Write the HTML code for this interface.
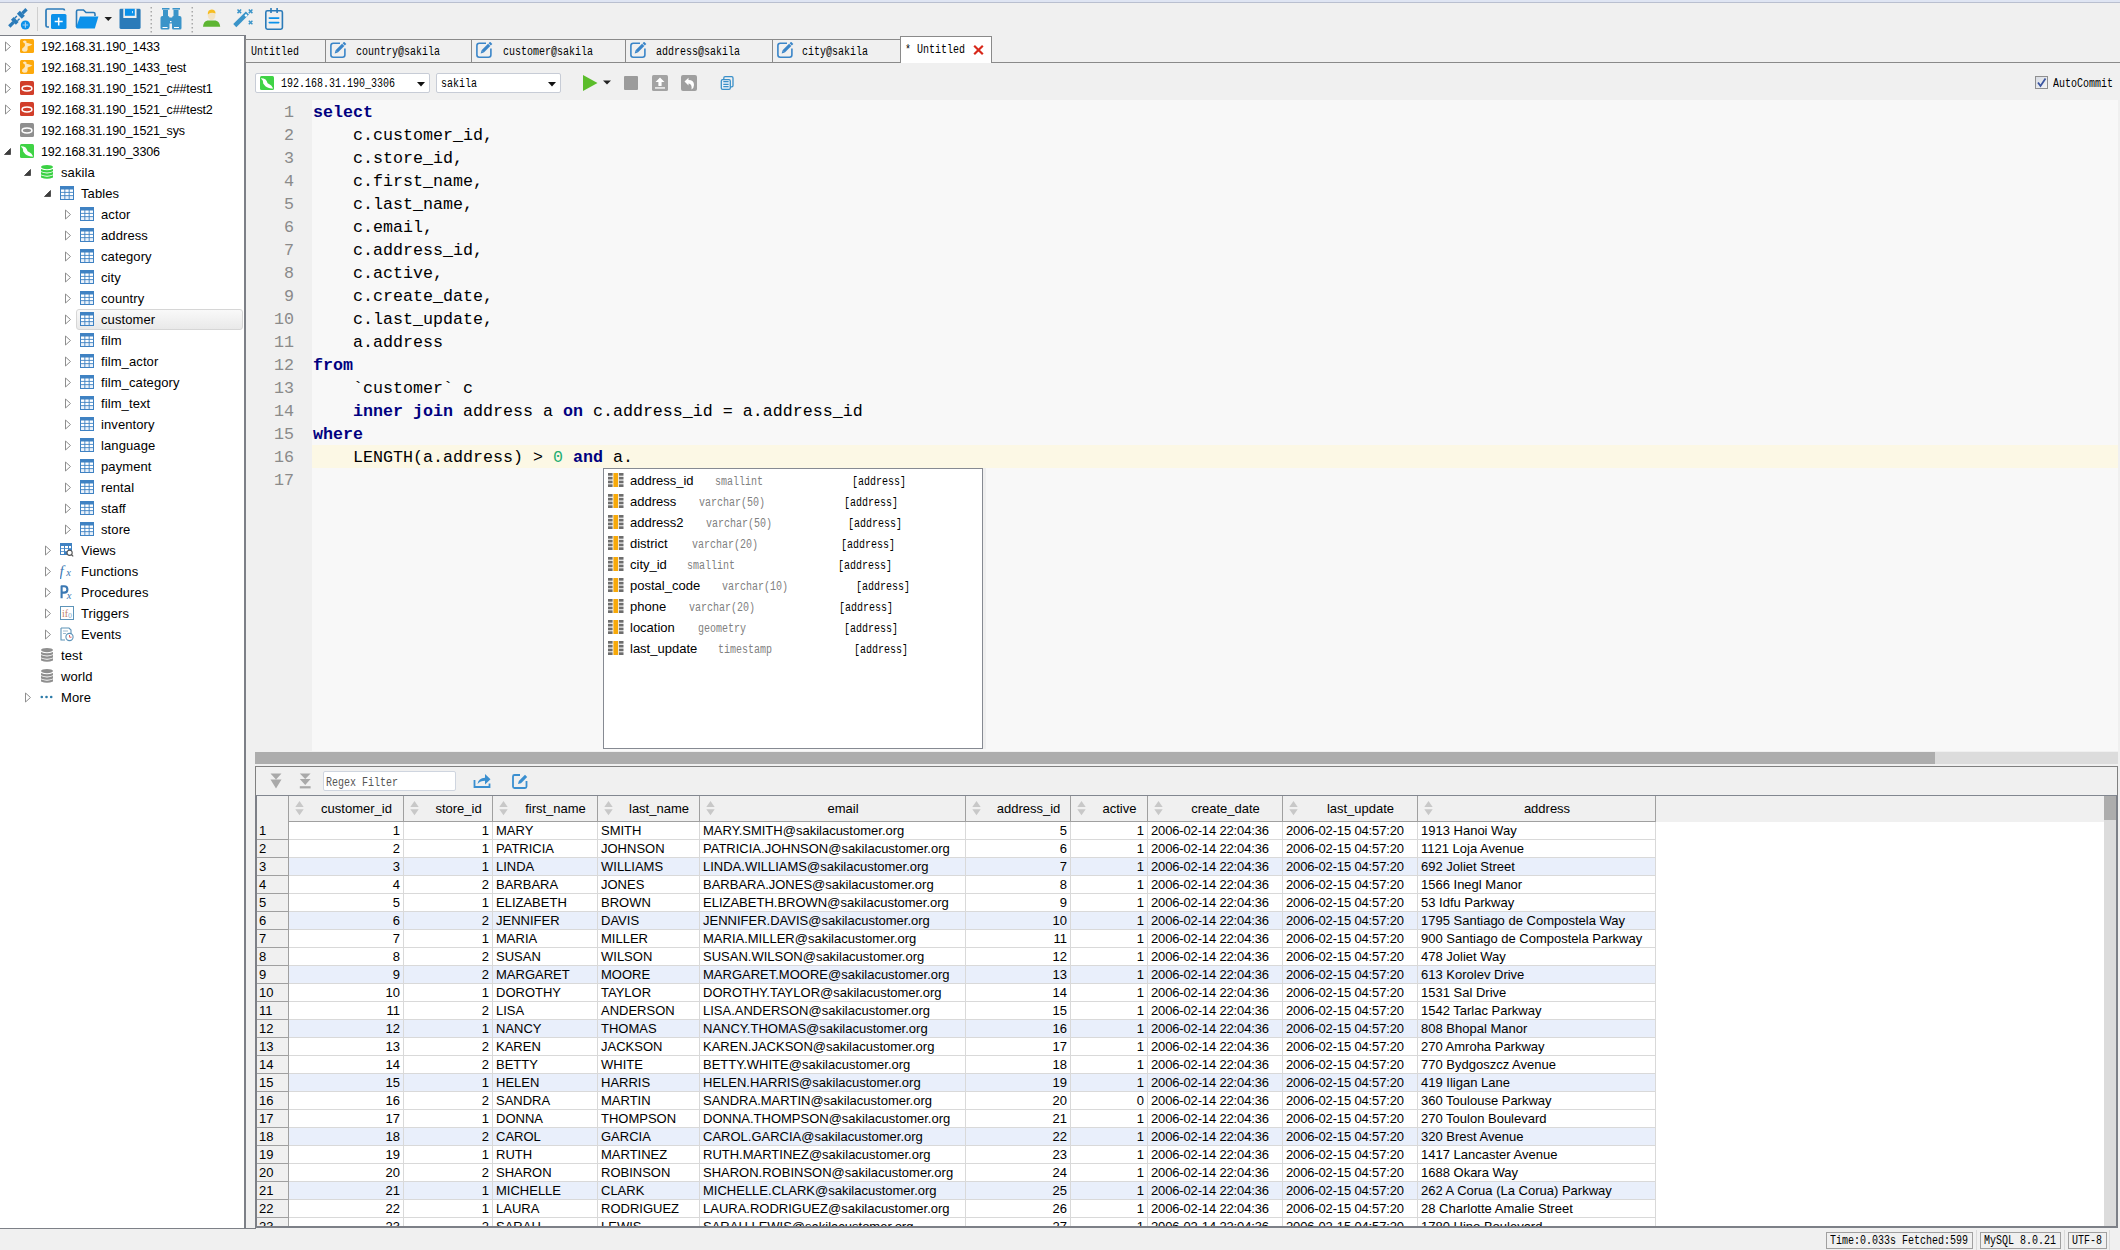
<!DOCTYPE html>
<html><head><meta charset="utf-8">
<style>
*{margin:0;padding:0;box-sizing:border-box}
html,body{width:2120px;height:1250px;overflow:hidden;background:#f0f0f0;font-family:"Liberation Sans",sans-serif;color:#000}
.a{position:absolute}
#topstrip{left:0;top:0;width:2120px;height:3px;background:#dfe5f3;border-bottom:1px solid #b9bfcf}
#left{left:0;top:35px;width:246px;height:1194px;background:#fff;border-top:1px solid #7d8087;border-right:2px solid #7d8087;border-bottom:1px solid #7d8087}
.tt{font-size:12.5px;line-height:21px;height:21px;white-space:nowrap;letter-spacing:-0.15px;color:#000}
.sel{width:167px;height:21px;border:1px solid #d6d6d6;border-radius:3px;background:linear-gradient(#f9f9f9,#e9e9e9)}
#tabline{left:246px;top:62px;width:1874px;height:1px;background:#8a8a8a}
#gutter{left:246px;top:100px;width:66px;height:651px;background:#f0f0f0}
#code{left:312px;top:100px;width:1806px;height:651px;background:#f8f8f8}
#hscroll{left:255px;top:752px;width:1863px;height:12px;background:#dcdcdc}
#hthumb{left:255px;top:752px;width:1680px;height:12px;background:#adadad}
#results{left:255px;top:766px;width:1863px;height:462px;border:1px solid #808080;border-bottom:2px solid #7d8087;background:#f0f0f0}
#grid{left:255px;top:795px;width:1863px;height:433px;background:#fff;border-top:1px solid #828790;border-left:2px solid #7d8087;border-right:2px solid #7d8087;border-bottom:2px solid #7d8087}
.ss{font-family:"Liberation Mono",monospace;font-size:12px;letter-spacing:0;line-height:14px;white-space:nowrap;color:#000;transform:scaleX(0.8333);transform-origin:0 0}
.tab{top:39px;height:24px;border:1px solid #8a8a8a;background:#f0f0f0}
.combo{background:#fff;border:1px solid #c7ccd6;border-radius:2px}
.ln{left:246px;width:48px;text-align:right;font-family:"Liberation Mono",monospace;font-size:16.67px;line-height:23px;color:#8a8a8a}
.code{left:313px;font-family:"Liberation Mono",monospace;font-size:16.67px;line-height:23px;white-space:pre;color:#000}
.kw{color:#000080;font-weight:bold}
.num{color:#1fae72}
.pn{font-size:13px;line-height:21px;white-space:nowrap;color:#000}
.pt{color:#808080}
.hd{top:796px;height:25px;line-height:25px;text-align:center;font-size:13px;white-space:nowrap}
.gc{height:17px;line-height:18px;font-size:13px;white-space:nowrap}
.dt{letter-spacing:-0.15px}
.sb{top:1232px;height:17px;border:1px solid #a0a0a0;font-family:"Liberation Mono",monospace;font-size:12px;letter-spacing:-1.2px;line-height:16px;padding-left:3px;white-space:nowrap;overflow:hidden}
.tw{font-size:13px;letter-spacing:0.1px}

</style></head>
<body>
<div id="topstrip" class="a"></div>
<div id="left" class="a"></div>
<svg class="a" style="left:5px;top:41px" width="8" height="12" viewBox="0 0 8 12"><path d="M0.5 1 L5.5 5.5 L0.5 10 Z" fill="#fff" stroke="#8e8e8e" stroke-width="1"/></svg>
<svg class="a" style="left:20px;top:39px" width="14" height="15" viewBox="0 0 14 15"><rect x="0" y="0" width="14" height="14" rx="1.5" fill="#fda90b"/><path d="M2.8 2.5 L4.5 1.4 L6.3 2 L6.5 3.8 L9.5 4.6 L12.4 5.6 L10.5 6.6 L7.6 7.6 L7.6 10.8 L6.5 12.5 L3.8 12.8 L2 11.5 L2.2 9.6 L4 8 L5 6.6 L4.8 4.6 L3.4 3.5 Z" fill="#fde6bb"/></svg>
<div class="a tt" style="left:41px;top:37px">192.168.31.190_1433</div>
<svg class="a" style="left:5px;top:62px" width="8" height="12" viewBox="0 0 8 12"><path d="M0.5 1 L5.5 5.5 L0.5 10 Z" fill="#fff" stroke="#8e8e8e" stroke-width="1"/></svg>
<svg class="a" style="left:20px;top:60px" width="14" height="15" viewBox="0 0 14 15"><rect x="0" y="0" width="14" height="14" rx="1.5" fill="#fda90b"/><path d="M2.8 2.5 L4.5 1.4 L6.3 2 L6.5 3.8 L9.5 4.6 L12.4 5.6 L10.5 6.6 L7.6 7.6 L7.6 10.8 L6.5 12.5 L3.8 12.8 L2 11.5 L2.2 9.6 L4 8 L5 6.6 L4.8 4.6 L3.4 3.5 Z" fill="#fde6bb"/></svg>
<div class="a tt" style="left:41px;top:58px">192.168.31.190_1433_test</div>
<svg class="a" style="left:5px;top:83px" width="8" height="12" viewBox="0 0 8 12"><path d="M0.5 1 L5.5 5.5 L0.5 10 Z" fill="#fff" stroke="#8e8e8e" stroke-width="1"/></svg>
<svg class="a" style="left:20px;top:81px" width="14" height="15" viewBox="0 0 14 15"><rect x="0" y="0" width="14" height="14" rx="1.5" fill="#d13e2a"/><ellipse cx="7" cy="7.5" rx="4.9" ry="2.4" fill="none" stroke="#fff" stroke-width="1.5"/></svg>
<div class="a tt" style="left:41px;top:79px">192.168.31.190_1521_c##test1</div>
<svg class="a" style="left:5px;top:104px" width="8" height="12" viewBox="0 0 8 12"><path d="M0.5 1 L5.5 5.5 L0.5 10 Z" fill="#fff" stroke="#8e8e8e" stroke-width="1"/></svg>
<svg class="a" style="left:20px;top:102px" width="14" height="15" viewBox="0 0 14 15"><rect x="0" y="0" width="14" height="14" rx="1.5" fill="#d13e2a"/><ellipse cx="7" cy="7.5" rx="4.9" ry="2.4" fill="none" stroke="#fff" stroke-width="1.5"/></svg>
<div class="a tt" style="left:41px;top:100px">192.168.31.190_1521_c##test2</div>
<svg class="a" style="left:20px;top:123px" width="14" height="15" viewBox="0 0 14 15"><rect x="0" y="0" width="14" height="14" rx="1.5" fill="#8f8f8f"/><ellipse cx="7" cy="7.5" rx="4.9" ry="2.4" fill="none" stroke="#fff" stroke-width="1.5"/></svg>
<div class="a tt" style="left:41px;top:121px">192.168.31.190_1521_sys</div>
<svg class="a" style="left:4px;top:148px" width="8" height="8" viewBox="0 0 8 8"><path d="M6.5 0.5 L6.5 6.5 L0.5 6.5 Z" fill="#3d3d3d" stroke="#3d3d3d" stroke-width="0.8" stroke-linejoin="round"/></svg>
<svg class="a" style="left:20px;top:144px" width="14" height="15" viewBox="0 0 14 15"><rect x="0" y="0" width="14" height="14" rx="1.5" fill="#3fd345"/><path d="M0.8 2.3 L3.5 2.4 L5.6 3.6 L6.8 5.2 L7.6 7.2 L9.8 8.6 L11.5 9.8 L12.2 11 L13.3 12.6 L11 12.5 L9 12 L7 11.3 L5.4 10.2 L4.4 9 L3.2 7.6 L3 5.6 L2.6 4.3 L1.6 3.2 Z" fill="#fff"/></svg>
<div class="a tt" style="left:41px;top:142px">192.168.31.190_3306</div>
<svg class="a" style="left:24px;top:169px" width="8" height="8" viewBox="0 0 8 8"><path d="M6.5 0.5 L6.5 6.5 L0.5 6.5 Z" fill="#3d3d3d" stroke="#3d3d3d" stroke-width="0.8" stroke-linejoin="round"/></svg>
<svg class="a" style="left:40px;top:165px" width="14" height="15" viewBox="0 0 14 15"><ellipse cx="7" cy="2.1" rx="6" ry="2.1" fill="#3ad143"/><path d="M1 3.9 Q7 6.6 13 3.9 V6.2 Q7 9 1 6.2 Z" fill="#3ad143"/><path d="M1 7.1 Q7 9.8 13 7.1 V9.4 Q7 12.2 1 9.4 Z" fill="#3ad143"/><path d="M1 10.3 Q7 13 13 10.3 V12.4 Q7 15.2 1 12.4 Z" fill="#3ad143"/></svg>
<div class="a tt tw" style="left:61px;top:162px">sakila</div>
<svg class="a" style="left:44px;top:190px" width="8" height="8" viewBox="0 0 8 8"><path d="M6.5 0.5 L6.5 6.5 L0.5 6.5 Z" fill="#3d3d3d" stroke="#3d3d3d" stroke-width="0.8" stroke-linejoin="round"/></svg>
<svg class="a" style="left:60px;top:186px" width="14" height="15" viewBox="0 0 14 15"><rect x="0" y="0" width="14" height="14" fill="#3f82c3"/><g fill="#fff"><rect x="1" y="3.5" width="3.4" height="2.4"/><rect x="5.3" y="3.5" width="3.4" height="2.4"/><rect x="9.6" y="3.5" width="3.4" height="2.4"/><rect x="1" y="6.8" width="3.4" height="2.4"/><rect x="5.3" y="6.8" width="3.4" height="2.4"/><rect x="9.6" y="6.8" width="3.4" height="2.4"/></g><g fill="#e9f1fa"><rect x="1" y="10.1" width="3.4" height="2.9"/><rect x="5.3" y="10.1" width="3.4" height="2.9"/><rect x="9.6" y="10.1" width="3.4" height="2.9"/></g></svg>
<div class="a tt tw" style="left:81px;top:183px">Tables</div>
<svg class="a" style="left:65px;top:209px" width="8" height="12" viewBox="0 0 8 12"><path d="M0.5 1 L5.5 5.5 L0.5 10 Z" fill="#fff" stroke="#8e8e8e" stroke-width="1"/></svg>
<svg class="a" style="left:80px;top:207px" width="14" height="15" viewBox="0 0 14 15"><rect x="0" y="0" width="14" height="14" fill="#3f82c3"/><g fill="#fff"><rect x="1" y="3.5" width="3.4" height="2.4"/><rect x="5.3" y="3.5" width="3.4" height="2.4"/><rect x="9.6" y="3.5" width="3.4" height="2.4"/><rect x="1" y="6.8" width="3.4" height="2.4"/><rect x="5.3" y="6.8" width="3.4" height="2.4"/><rect x="9.6" y="6.8" width="3.4" height="2.4"/></g><g fill="#e9f1fa"><rect x="1" y="10.1" width="3.4" height="2.9"/><rect x="5.3" y="10.1" width="3.4" height="2.9"/><rect x="9.6" y="10.1" width="3.4" height="2.9"/></g></svg>
<div class="a tt tw" style="left:101px;top:204px">actor</div>
<svg class="a" style="left:65px;top:230px" width="8" height="12" viewBox="0 0 8 12"><path d="M0.5 1 L5.5 5.5 L0.5 10 Z" fill="#fff" stroke="#8e8e8e" stroke-width="1"/></svg>
<svg class="a" style="left:80px;top:228px" width="14" height="15" viewBox="0 0 14 15"><rect x="0" y="0" width="14" height="14" fill="#3f82c3"/><g fill="#fff"><rect x="1" y="3.5" width="3.4" height="2.4"/><rect x="5.3" y="3.5" width="3.4" height="2.4"/><rect x="9.6" y="3.5" width="3.4" height="2.4"/><rect x="1" y="6.8" width="3.4" height="2.4"/><rect x="5.3" y="6.8" width="3.4" height="2.4"/><rect x="9.6" y="6.8" width="3.4" height="2.4"/></g><g fill="#e9f1fa"><rect x="1" y="10.1" width="3.4" height="2.9"/><rect x="5.3" y="10.1" width="3.4" height="2.9"/><rect x="9.6" y="10.1" width="3.4" height="2.9"/></g></svg>
<div class="a tt tw" style="left:101px;top:225px">address</div>
<svg class="a" style="left:65px;top:251px" width="8" height="12" viewBox="0 0 8 12"><path d="M0.5 1 L5.5 5.5 L0.5 10 Z" fill="#fff" stroke="#8e8e8e" stroke-width="1"/></svg>
<svg class="a" style="left:80px;top:249px" width="14" height="15" viewBox="0 0 14 15"><rect x="0" y="0" width="14" height="14" fill="#3f82c3"/><g fill="#fff"><rect x="1" y="3.5" width="3.4" height="2.4"/><rect x="5.3" y="3.5" width="3.4" height="2.4"/><rect x="9.6" y="3.5" width="3.4" height="2.4"/><rect x="1" y="6.8" width="3.4" height="2.4"/><rect x="5.3" y="6.8" width="3.4" height="2.4"/><rect x="9.6" y="6.8" width="3.4" height="2.4"/></g><g fill="#e9f1fa"><rect x="1" y="10.1" width="3.4" height="2.9"/><rect x="5.3" y="10.1" width="3.4" height="2.9"/><rect x="9.6" y="10.1" width="3.4" height="2.9"/></g></svg>
<div class="a tt tw" style="left:101px;top:246px">category</div>
<svg class="a" style="left:65px;top:272px" width="8" height="12" viewBox="0 0 8 12"><path d="M0.5 1 L5.5 5.5 L0.5 10 Z" fill="#fff" stroke="#8e8e8e" stroke-width="1"/></svg>
<svg class="a" style="left:80px;top:270px" width="14" height="15" viewBox="0 0 14 15"><rect x="0" y="0" width="14" height="14" fill="#3f82c3"/><g fill="#fff"><rect x="1" y="3.5" width="3.4" height="2.4"/><rect x="5.3" y="3.5" width="3.4" height="2.4"/><rect x="9.6" y="3.5" width="3.4" height="2.4"/><rect x="1" y="6.8" width="3.4" height="2.4"/><rect x="5.3" y="6.8" width="3.4" height="2.4"/><rect x="9.6" y="6.8" width="3.4" height="2.4"/></g><g fill="#e9f1fa"><rect x="1" y="10.1" width="3.4" height="2.9"/><rect x="5.3" y="10.1" width="3.4" height="2.9"/><rect x="9.6" y="10.1" width="3.4" height="2.9"/></g></svg>
<div class="a tt tw" style="left:101px;top:267px">city</div>
<svg class="a" style="left:65px;top:293px" width="8" height="12" viewBox="0 0 8 12"><path d="M0.5 1 L5.5 5.5 L0.5 10 Z" fill="#fff" stroke="#8e8e8e" stroke-width="1"/></svg>
<svg class="a" style="left:80px;top:291px" width="14" height="15" viewBox="0 0 14 15"><rect x="0" y="0" width="14" height="14" fill="#3f82c3"/><g fill="#fff"><rect x="1" y="3.5" width="3.4" height="2.4"/><rect x="5.3" y="3.5" width="3.4" height="2.4"/><rect x="9.6" y="3.5" width="3.4" height="2.4"/><rect x="1" y="6.8" width="3.4" height="2.4"/><rect x="5.3" y="6.8" width="3.4" height="2.4"/><rect x="9.6" y="6.8" width="3.4" height="2.4"/></g><g fill="#e9f1fa"><rect x="1" y="10.1" width="3.4" height="2.9"/><rect x="5.3" y="10.1" width="3.4" height="2.9"/><rect x="9.6" y="10.1" width="3.4" height="2.9"/></g></svg>
<div class="a tt tw" style="left:101px;top:288px">country</div>
<div class="a sel" style="left:76px;top:309px"></div>
<svg class="a" style="left:65px;top:314px" width="8" height="12" viewBox="0 0 8 12"><path d="M0.5 1 L5.5 5.5 L0.5 10 Z" fill="#fff" stroke="#8e8e8e" stroke-width="1"/></svg>
<svg class="a" style="left:80px;top:312px" width="14" height="15" viewBox="0 0 14 15"><rect x="0" y="0" width="14" height="14" fill="#3f82c3"/><g fill="#fff"><rect x="1" y="3.5" width="3.4" height="2.4"/><rect x="5.3" y="3.5" width="3.4" height="2.4"/><rect x="9.6" y="3.5" width="3.4" height="2.4"/><rect x="1" y="6.8" width="3.4" height="2.4"/><rect x="5.3" y="6.8" width="3.4" height="2.4"/><rect x="9.6" y="6.8" width="3.4" height="2.4"/></g><g fill="#e9f1fa"><rect x="1" y="10.1" width="3.4" height="2.9"/><rect x="5.3" y="10.1" width="3.4" height="2.9"/><rect x="9.6" y="10.1" width="3.4" height="2.9"/></g></svg>
<div class="a tt tw" style="left:101px;top:309px">customer</div>
<svg class="a" style="left:65px;top:335px" width="8" height="12" viewBox="0 0 8 12"><path d="M0.5 1 L5.5 5.5 L0.5 10 Z" fill="#fff" stroke="#8e8e8e" stroke-width="1"/></svg>
<svg class="a" style="left:80px;top:333px" width="14" height="15" viewBox="0 0 14 15"><rect x="0" y="0" width="14" height="14" fill="#3f82c3"/><g fill="#fff"><rect x="1" y="3.5" width="3.4" height="2.4"/><rect x="5.3" y="3.5" width="3.4" height="2.4"/><rect x="9.6" y="3.5" width="3.4" height="2.4"/><rect x="1" y="6.8" width="3.4" height="2.4"/><rect x="5.3" y="6.8" width="3.4" height="2.4"/><rect x="9.6" y="6.8" width="3.4" height="2.4"/></g><g fill="#e9f1fa"><rect x="1" y="10.1" width="3.4" height="2.9"/><rect x="5.3" y="10.1" width="3.4" height="2.9"/><rect x="9.6" y="10.1" width="3.4" height="2.9"/></g></svg>
<div class="a tt tw" style="left:101px;top:330px">film</div>
<svg class="a" style="left:65px;top:356px" width="8" height="12" viewBox="0 0 8 12"><path d="M0.5 1 L5.5 5.5 L0.5 10 Z" fill="#fff" stroke="#8e8e8e" stroke-width="1"/></svg>
<svg class="a" style="left:80px;top:354px" width="14" height="15" viewBox="0 0 14 15"><rect x="0" y="0" width="14" height="14" fill="#3f82c3"/><g fill="#fff"><rect x="1" y="3.5" width="3.4" height="2.4"/><rect x="5.3" y="3.5" width="3.4" height="2.4"/><rect x="9.6" y="3.5" width="3.4" height="2.4"/><rect x="1" y="6.8" width="3.4" height="2.4"/><rect x="5.3" y="6.8" width="3.4" height="2.4"/><rect x="9.6" y="6.8" width="3.4" height="2.4"/></g><g fill="#e9f1fa"><rect x="1" y="10.1" width="3.4" height="2.9"/><rect x="5.3" y="10.1" width="3.4" height="2.9"/><rect x="9.6" y="10.1" width="3.4" height="2.9"/></g></svg>
<div class="a tt tw" style="left:101px;top:351px">film_actor</div>
<svg class="a" style="left:65px;top:377px" width="8" height="12" viewBox="0 0 8 12"><path d="M0.5 1 L5.5 5.5 L0.5 10 Z" fill="#fff" stroke="#8e8e8e" stroke-width="1"/></svg>
<svg class="a" style="left:80px;top:375px" width="14" height="15" viewBox="0 0 14 15"><rect x="0" y="0" width="14" height="14" fill="#3f82c3"/><g fill="#fff"><rect x="1" y="3.5" width="3.4" height="2.4"/><rect x="5.3" y="3.5" width="3.4" height="2.4"/><rect x="9.6" y="3.5" width="3.4" height="2.4"/><rect x="1" y="6.8" width="3.4" height="2.4"/><rect x="5.3" y="6.8" width="3.4" height="2.4"/><rect x="9.6" y="6.8" width="3.4" height="2.4"/></g><g fill="#e9f1fa"><rect x="1" y="10.1" width="3.4" height="2.9"/><rect x="5.3" y="10.1" width="3.4" height="2.9"/><rect x="9.6" y="10.1" width="3.4" height="2.9"/></g></svg>
<div class="a tt tw" style="left:101px;top:372px">film_category</div>
<svg class="a" style="left:65px;top:398px" width="8" height="12" viewBox="0 0 8 12"><path d="M0.5 1 L5.5 5.5 L0.5 10 Z" fill="#fff" stroke="#8e8e8e" stroke-width="1"/></svg>
<svg class="a" style="left:80px;top:396px" width="14" height="15" viewBox="0 0 14 15"><rect x="0" y="0" width="14" height="14" fill="#3f82c3"/><g fill="#fff"><rect x="1" y="3.5" width="3.4" height="2.4"/><rect x="5.3" y="3.5" width="3.4" height="2.4"/><rect x="9.6" y="3.5" width="3.4" height="2.4"/><rect x="1" y="6.8" width="3.4" height="2.4"/><rect x="5.3" y="6.8" width="3.4" height="2.4"/><rect x="9.6" y="6.8" width="3.4" height="2.4"/></g><g fill="#e9f1fa"><rect x="1" y="10.1" width="3.4" height="2.9"/><rect x="5.3" y="10.1" width="3.4" height="2.9"/><rect x="9.6" y="10.1" width="3.4" height="2.9"/></g></svg>
<div class="a tt tw" style="left:101px;top:393px">film_text</div>
<svg class="a" style="left:65px;top:419px" width="8" height="12" viewBox="0 0 8 12"><path d="M0.5 1 L5.5 5.5 L0.5 10 Z" fill="#fff" stroke="#8e8e8e" stroke-width="1"/></svg>
<svg class="a" style="left:80px;top:417px" width="14" height="15" viewBox="0 0 14 15"><rect x="0" y="0" width="14" height="14" fill="#3f82c3"/><g fill="#fff"><rect x="1" y="3.5" width="3.4" height="2.4"/><rect x="5.3" y="3.5" width="3.4" height="2.4"/><rect x="9.6" y="3.5" width="3.4" height="2.4"/><rect x="1" y="6.8" width="3.4" height="2.4"/><rect x="5.3" y="6.8" width="3.4" height="2.4"/><rect x="9.6" y="6.8" width="3.4" height="2.4"/></g><g fill="#e9f1fa"><rect x="1" y="10.1" width="3.4" height="2.9"/><rect x="5.3" y="10.1" width="3.4" height="2.9"/><rect x="9.6" y="10.1" width="3.4" height="2.9"/></g></svg>
<div class="a tt tw" style="left:101px;top:414px">inventory</div>
<svg class="a" style="left:65px;top:440px" width="8" height="12" viewBox="0 0 8 12"><path d="M0.5 1 L5.5 5.5 L0.5 10 Z" fill="#fff" stroke="#8e8e8e" stroke-width="1"/></svg>
<svg class="a" style="left:80px;top:438px" width="14" height="15" viewBox="0 0 14 15"><rect x="0" y="0" width="14" height="14" fill="#3f82c3"/><g fill="#fff"><rect x="1" y="3.5" width="3.4" height="2.4"/><rect x="5.3" y="3.5" width="3.4" height="2.4"/><rect x="9.6" y="3.5" width="3.4" height="2.4"/><rect x="1" y="6.8" width="3.4" height="2.4"/><rect x="5.3" y="6.8" width="3.4" height="2.4"/><rect x="9.6" y="6.8" width="3.4" height="2.4"/></g><g fill="#e9f1fa"><rect x="1" y="10.1" width="3.4" height="2.9"/><rect x="5.3" y="10.1" width="3.4" height="2.9"/><rect x="9.6" y="10.1" width="3.4" height="2.9"/></g></svg>
<div class="a tt tw" style="left:101px;top:435px">language</div>
<svg class="a" style="left:65px;top:461px" width="8" height="12" viewBox="0 0 8 12"><path d="M0.5 1 L5.5 5.5 L0.5 10 Z" fill="#fff" stroke="#8e8e8e" stroke-width="1"/></svg>
<svg class="a" style="left:80px;top:459px" width="14" height="15" viewBox="0 0 14 15"><rect x="0" y="0" width="14" height="14" fill="#3f82c3"/><g fill="#fff"><rect x="1" y="3.5" width="3.4" height="2.4"/><rect x="5.3" y="3.5" width="3.4" height="2.4"/><rect x="9.6" y="3.5" width="3.4" height="2.4"/><rect x="1" y="6.8" width="3.4" height="2.4"/><rect x="5.3" y="6.8" width="3.4" height="2.4"/><rect x="9.6" y="6.8" width="3.4" height="2.4"/></g><g fill="#e9f1fa"><rect x="1" y="10.1" width="3.4" height="2.9"/><rect x="5.3" y="10.1" width="3.4" height="2.9"/><rect x="9.6" y="10.1" width="3.4" height="2.9"/></g></svg>
<div class="a tt tw" style="left:101px;top:456px">payment</div>
<svg class="a" style="left:65px;top:482px" width="8" height="12" viewBox="0 0 8 12"><path d="M0.5 1 L5.5 5.5 L0.5 10 Z" fill="#fff" stroke="#8e8e8e" stroke-width="1"/></svg>
<svg class="a" style="left:80px;top:480px" width="14" height="15" viewBox="0 0 14 15"><rect x="0" y="0" width="14" height="14" fill="#3f82c3"/><g fill="#fff"><rect x="1" y="3.5" width="3.4" height="2.4"/><rect x="5.3" y="3.5" width="3.4" height="2.4"/><rect x="9.6" y="3.5" width="3.4" height="2.4"/><rect x="1" y="6.8" width="3.4" height="2.4"/><rect x="5.3" y="6.8" width="3.4" height="2.4"/><rect x="9.6" y="6.8" width="3.4" height="2.4"/></g><g fill="#e9f1fa"><rect x="1" y="10.1" width="3.4" height="2.9"/><rect x="5.3" y="10.1" width="3.4" height="2.9"/><rect x="9.6" y="10.1" width="3.4" height="2.9"/></g></svg>
<div class="a tt tw" style="left:101px;top:477px">rental</div>
<svg class="a" style="left:65px;top:503px" width="8" height="12" viewBox="0 0 8 12"><path d="M0.5 1 L5.5 5.5 L0.5 10 Z" fill="#fff" stroke="#8e8e8e" stroke-width="1"/></svg>
<svg class="a" style="left:80px;top:501px" width="14" height="15" viewBox="0 0 14 15"><rect x="0" y="0" width="14" height="14" fill="#3f82c3"/><g fill="#fff"><rect x="1" y="3.5" width="3.4" height="2.4"/><rect x="5.3" y="3.5" width="3.4" height="2.4"/><rect x="9.6" y="3.5" width="3.4" height="2.4"/><rect x="1" y="6.8" width="3.4" height="2.4"/><rect x="5.3" y="6.8" width="3.4" height="2.4"/><rect x="9.6" y="6.8" width="3.4" height="2.4"/></g><g fill="#e9f1fa"><rect x="1" y="10.1" width="3.4" height="2.9"/><rect x="5.3" y="10.1" width="3.4" height="2.9"/><rect x="9.6" y="10.1" width="3.4" height="2.9"/></g></svg>
<div class="a tt tw" style="left:101px;top:498px">staff</div>
<svg class="a" style="left:65px;top:524px" width="8" height="12" viewBox="0 0 8 12"><path d="M0.5 1 L5.5 5.5 L0.5 10 Z" fill="#fff" stroke="#8e8e8e" stroke-width="1"/></svg>
<svg class="a" style="left:80px;top:522px" width="14" height="15" viewBox="0 0 14 15"><rect x="0" y="0" width="14" height="14" fill="#3f82c3"/><g fill="#fff"><rect x="1" y="3.5" width="3.4" height="2.4"/><rect x="5.3" y="3.5" width="3.4" height="2.4"/><rect x="9.6" y="3.5" width="3.4" height="2.4"/><rect x="1" y="6.8" width="3.4" height="2.4"/><rect x="5.3" y="6.8" width="3.4" height="2.4"/><rect x="9.6" y="6.8" width="3.4" height="2.4"/></g><g fill="#e9f1fa"><rect x="1" y="10.1" width="3.4" height="2.9"/><rect x="5.3" y="10.1" width="3.4" height="2.9"/><rect x="9.6" y="10.1" width="3.4" height="2.9"/></g></svg>
<div class="a tt tw" style="left:101px;top:519px">store</div>
<svg class="a" style="left:45px;top:545px" width="8" height="12" viewBox="0 0 8 12"><path d="M0.5 1 L5.5 5.5 L0.5 10 Z" fill="#fff" stroke="#8e8e8e" stroke-width="1"/></svg>
<svg class="a" style="left:60px;top:543px" width="14" height="15" viewBox="0 0 14 15"><rect x="0" y="0" width="12" height="12" fill="#3f82c3"/><g fill="#fff"><rect x="1" y="3" width="3" height="2.2"/><rect x="5" y="3" width="3" height="2.2"/><rect x="9" y="3" width="2" height="2.2"/><rect x="1" y="6" width="3" height="2.2"/><rect x="5" y="6" width="3" height="2.2"/><rect x="1" y="9" width="3" height="2"/></g><circle cx="9.6" cy="9.8" r="2.6" fill="#fff" stroke="#555" stroke-width="1.1"/><path d="M11.4 11.6l1.8 1.8" stroke="#555" stroke-width="1.3"/></svg>
<div class="a tt tw" style="left:81px;top:540px">Views</div>
<svg class="a" style="left:45px;top:566px" width="8" height="12" viewBox="0 0 8 12"><path d="M0.5 1 L5.5 5.5 L0.5 10 Z" fill="#fff" stroke="#8e8e8e" stroke-width="1"/></svg>
<svg class="a" style="left:60px;top:564px" width="14" height="15" viewBox="0 0 14 15"><text x="-0.5" y="11.5" font-family="Liberation Serif" font-style="italic" font-size="15" fill="#3b78b3">f</text><text x="6.2" y="12" font-family="Liberation Serif" font-style="italic" font-size="10.5" fill="#3b78b3">x</text></svg>
<div class="a tt tw" style="left:81px;top:561px">Functions</div>
<svg class="a" style="left:45px;top:587px" width="8" height="12" viewBox="0 0 8 12"><path d="M0.5 1 L5.5 5.5 L0.5 10 Z" fill="#fff" stroke="#8e8e8e" stroke-width="1"/></svg>
<svg class="a" style="left:60px;top:585px" width="14" height="15" viewBox="0 0 14 15"><path d="M1.6 13.2 V1.2 H4.2 Q7.4 1.2 7.4 4.4 Q7.4 7.6 4.2 7.6 H2.6" fill="none" stroke="#3b78b3" stroke-width="2.1" stroke-linejoin="round"/><text x="6.8" y="13.6" font-family="Liberation Serif" font-style="italic" font-size="10.5" fill="#3b78b3">x</text></svg>
<div class="a tt tw" style="left:81px;top:582px">Procedures</div>
<svg class="a" style="left:45px;top:608px" width="8" height="12" viewBox="0 0 8 12"><path d="M0.5 1 L5.5 5.5 L0.5 10 Z" fill="#fff" stroke="#8e8e8e" stroke-width="1"/></svg>
<svg class="a" style="left:60px;top:606px" width="14" height="15" viewBox="0 0 14 15"><rect x="0.5" y="0.5" width="13" height="13" fill="#fff" stroke="#5d93b8" stroke-width="1"/><text x="2" y="11" font-family="Liberation Serif" font-size="10" fill="#c0806a">if</text><text x="8" y="10.5" font-family="Liberation Sans" font-size="6" fill="#5d93b8">()</text></svg>
<div class="a tt tw" style="left:81px;top:603px">Triggers</div>
<svg class="a" style="left:45px;top:629px" width="8" height="12" viewBox="0 0 8 12"><path d="M0.5 1 L5.5 5.5 L0.5 10 Z" fill="#fff" stroke="#8e8e8e" stroke-width="1"/></svg>
<svg class="a" style="left:60px;top:627px" width="14" height="15" viewBox="0 0 14 15"><path d="M1 1h8l2 2v5" fill="none" stroke="#5d93b8" stroke-width="1.1"/><path d="M1 1v12h4" fill="none" stroke="#5d93b8" stroke-width="1.1"/><path d="M3 4h5M3 6.5h3" stroke="#9dbad0" stroke-width="1"/><circle cx="9.5" cy="10" r="3.6" fill="#fff" stroke="#5d93b8" stroke-width="1.1"/><path d="M9.5 8v2.2h2" fill="none" stroke="#d66" stroke-width="1"/></svg>
<div class="a tt tw" style="left:81px;top:624px">Events</div>
<svg class="a" style="left:40px;top:648px" width="14" height="15" viewBox="0 0 14 15"><ellipse cx="7" cy="2.1" rx="6" ry="2.1" fill="#8f8f8f"/><path d="M1 3.9 Q7 6.6 13 3.9 V6.2 Q7 9 1 6.2 Z" fill="#8f8f8f"/><path d="M1 7.1 Q7 9.8 13 7.1 V9.4 Q7 12.2 1 9.4 Z" fill="#8f8f8f"/><path d="M1 10.3 Q7 13 13 10.3 V12.4 Q7 15.2 1 12.4 Z" fill="#8f8f8f"/></svg>
<div class="a tt tw" style="left:61px;top:645px">test</div>
<svg class="a" style="left:40px;top:669px" width="14" height="15" viewBox="0 0 14 15"><ellipse cx="7" cy="2.1" rx="6" ry="2.1" fill="#8f8f8f"/><path d="M1 3.9 Q7 6.6 13 3.9 V6.2 Q7 9 1 6.2 Z" fill="#8f8f8f"/><path d="M1 7.1 Q7 9.8 13 7.1 V9.4 Q7 12.2 1 9.4 Z" fill="#8f8f8f"/><path d="M1 10.3 Q7 13 13 10.3 V12.4 Q7 15.2 1 12.4 Z" fill="#8f8f8f"/></svg>
<div class="a tt tw" style="left:61px;top:666px">world</div>
<svg class="a" style="left:25px;top:692px" width="8" height="12" viewBox="0 0 8 12"><path d="M0.5 1 L5.5 5.5 L0.5 10 Z" fill="#fff" stroke="#8e8e8e" stroke-width="1"/></svg>
<svg class="a" style="left:40px;top:690px" width="14" height="15" viewBox="0 0 14 15"><circle cx="1.8" cy="7" r="1.3" fill="#2c7aa8"/><circle cx="6.5" cy="7" r="1.3" fill="#2c7aa8"/><circle cx="11.2" cy="7" r="1.3" fill="#2c7aa8"/></svg>
<div class="a tt tw" style="left:61px;top:687px">More</div>
<svg class="a" style="left:0;top:3px" width="300" height="32" viewBox="0 3 300 32">
<!-- connection -->
<g transform="rotate(-45 18 18)" fill="#2b7bb9">
<rect x="5.8" y="16.2" width="6.2" height="3.3"/>
<rect x="11.8" y="14.2" width="3.9" height="7"/>
<rect x="15.6" y="15.1" width="3" height="1.4"/>
<rect x="15.6" y="18.9" width="3" height="1.4"/>
<rect x="20.2" y="14.2" width="4.3" height="7"/>
<rect x="24.4" y="16.2" width="5.8" height="3.3"/>
</g>
<circle cx="25.4" cy="25" r="4.6" fill="#0b91ea"/>
<path d="M25.4 22.2v5.6M22.6 25h5.6" stroke="#9fd0f6" stroke-width="1.2"/>
<rect x="37" y="7" width="1" height="24" fill="#cfcfcf"/>
<!-- new query -->
<path d="M49 27 L47.5 27 Q46 27 46 25.5 L46 10.5 Q46 9 47.5 9 L63 9 Q64.5 9 64.5 10.5" fill="none" stroke="#2b7bb9" stroke-width="1.7"/>
<rect x="51" y="14" width="15.5" height="15" rx="1.5" fill="#0b91ea"/>
<path d="M58.7 17.5v8M54.7 21.5h8" stroke="#fff" stroke-width="1.5"/>
<!-- folder -->
<path d="M76.5 27 L76.5 11.5 Q76.5 10 78 10 L83.5 10 L86 12.5 L93.5 12.5 Q95 12.5 95 14 L95 16" fill="none" stroke="#2b7bb9" stroke-width="1.6"/>
<path d="M76.2 27.2 Q76.2 28.6 77.6 28.6 L94.8 28.6 L98.4 16.6 L80 16.6 Z" fill="#0b91ea"/>
<path d="M104.5 17 L112 17 L108.25 21 Z" fill="#1e1e1e"/>
<!-- save -->
<path d="M119.5 10 Q119.5 8.8 120.7 8.8 L139.3 8.8 Q140.6 8.8 140.6 10 L140.6 27.6 Q140.6 29 139.3 29 L120.8 29 Q119.5 29 119.5 27.6 Z" fill="#2b7bb9"/>
<rect x="123.3" y="8.5" width="13.2" height="9.5" fill="#f0f0f0"/>
<rect x="124.9" y="8.8" width="9.9" height="7" fill="#0b91ea"/>
<rect x="132" y="11" width="0.9" height="2.2" fill="#cfe8fb"/>
<!-- dotted seps -->
<g fill="#a8a8a8">
<rect x="150.5" y="7" width="1.5" height="1.5"/><rect x="150.5" y="11" width="1.5" height="1.5"/><rect x="150.5" y="15" width="1.5" height="1.5"/><rect x="150.5" y="19" width="1.5" height="1.5"/><rect x="150.5" y="23" width="1.5" height="1.5"/><rect x="150.5" y="27" width="1.5" height="1.5"/><rect x="150.5" y="31" width="1.5" height="1.5"/>
<rect x="191.5" y="7" width="1.5" height="1.5"/><rect x="191.5" y="11" width="1.5" height="1.5"/><rect x="191.5" y="15" width="1.5" height="1.5"/><rect x="191.5" y="19" width="1.5" height="1.5"/><rect x="191.5" y="23" width="1.5" height="1.5"/><rect x="191.5" y="27" width="1.5" height="1.5"/><rect x="191.5" y="31" width="1.5" height="1.5"/>
</g>
<!-- binoculars -->
<g fill="#3a94c9">
<rect x="162" y="8" width="7.5" height="1.6"/>
<rect x="172.5" y="8" width="7.5" height="1.6"/>
<rect x="163" y="10" width="5" height="6"/>
<rect x="173.5" y="10" width="5" height="6"/>
<path d="M160.5 18 Q160.5 16 162.5 16 L168 16 Q169.5 16 169.5 18 L169.5 28 Q169.5 29.5 168 29.5 L162 29.5 Q160.5 29.5 160.5 28 Z"/>
<path d="M172 18 Q172 16 173.5 16 L179.5 16 Q181.5 16 181.5 18 L181.5 28 Q181.5 29.5 180 29.5 L173.5 29.5 Q172 29.5 172 28 Z"/>
<rect x="169" y="17.5" width="3.5" height="6"/>
</g>
<rect x="162.5" y="27" width="5" height="1" fill="#fff"/><rect x="174" y="27" width="5" height="1" fill="#fff"/>
<rect x="170" y="21" width="1.5" height="1.2" fill="#fff"/>
<!-- user -->
<path d="M203 26.8 Q203.3 21.5 207.5 20.5 L215.5 20.5 Q219.8 21.5 220.2 26.8 Z" fill="#5db532"/>
<ellipse cx="211.6" cy="15.5" rx="3.8" ry="4.6" fill="#f3e3c3"/>
<path d="M207.8 14.5 Q207.5 9.7 211.6 9.5 Q215.5 9.7 215.6 13.5 Q213 12.2 210 13 Z" fill="#f6bd22"/>
<!-- wand -->
<path d="M234.8 25.6 L247.4 13" stroke="#3a94c9" stroke-width="4.4"/>
<rect x="244.9" y="14.3" width="2.2" height="2.2" fill="#fff" transform="rotate(45 246 15.4)"/>
<g stroke="#3a94c9" stroke-width="1.5">
<path d="M237.5 9.5l3.6 3.6M241.1 9.5l-3.6 3.6"/>
<path d="M248.8 9.5l3.6 3.6M252.4 9.5l-3.6 3.6"/>
<path d="M248.8 20.7l3.6 3.6M252.4 20.7l-3.6 3.6"/>
</g>
<!-- notepad -->
<rect x="265.8" y="10.8" width="16.6" height="18.4" rx="1.6" fill="none" stroke="#2b7bb9" stroke-width="1.6"/>
<rect x="270.2" y="8" width="1.6" height="5" fill="#2b7bb9"/>
<rect x="276.3" y="8" width="1.6" height="5" fill="#2b7bb9"/>
<rect x="268.5" y="17.3" width="11" height="1.6" rx=".8" fill="#0b91ea"/>
<rect x="268.5" y="21.8" width="11" height="1.6" rx=".8" fill="#0b91ea"/>
</svg>
<div id="tabline" class="a"></div>
<div class="a tab" style="left:245px;width:81px"></div>
<div class="a ss" style="left:251px;top:45px">Untitled</div>
<div class="a tab" style="left:325px;width:147px"></div>
<svg class="a" style="left:330px;top:42px" width="17" height="17" viewBox="0 0 17 17"><path d="M10 1.2 H3.3 Q0.9 1.2 0.9 3.6 V12.8 Q0.9 15.2 3.3 15.2 H12.5 Q14.9 15.2 14.9 12.8 V6.4" fill="none" stroke="#3a85c8" stroke-width="1.6"/><g transform="translate(-0.3 0.7)" fill="#3a85c8"><path d="M5.87 7.47 L12.37 0.97 L14.63 3.23 L8.13 9.73 Z"/><path d="M5.87 7.47 L8.13 9.73 L5 10.8 Z"/><path d="M12.9 0.5 L14.4 -1 L16.6 1.2 L15.1 2.7 Z"/></g></svg>
<div class="a ss" style="left:356px;top:45px">country@sakila</div>
<div class="a tab" style="left:471px;width:155px"></div>
<svg class="a" style="left:476px;top:42px" width="17" height="17" viewBox="0 0 17 17"><path d="M10 1.2 H3.3 Q0.9 1.2 0.9 3.6 V12.8 Q0.9 15.2 3.3 15.2 H12.5 Q14.9 15.2 14.9 12.8 V6.4" fill="none" stroke="#3a85c8" stroke-width="1.6"/><g transform="translate(-0.3 0.7)" fill="#3a85c8"><path d="M5.87 7.47 L12.37 0.97 L14.63 3.23 L8.13 9.73 Z"/><path d="M5.87 7.47 L8.13 9.73 L5 10.8 Z"/><path d="M12.9 0.5 L14.4 -1 L16.6 1.2 L15.1 2.7 Z"/></g></svg>
<div class="a ss" style="left:503px;top:45px">customer@sakila</div>
<div class="a tab" style="left:625px;width:148px"></div>
<svg class="a" style="left:630px;top:42px" width="17" height="17" viewBox="0 0 17 17"><path d="M10 1.2 H3.3 Q0.9 1.2 0.9 3.6 V12.8 Q0.9 15.2 3.3 15.2 H12.5 Q14.9 15.2 14.9 12.8 V6.4" fill="none" stroke="#3a85c8" stroke-width="1.6"/><g transform="translate(-0.3 0.7)" fill="#3a85c8"><path d="M5.87 7.47 L12.37 0.97 L14.63 3.23 L8.13 9.73 Z"/><path d="M5.87 7.47 L8.13 9.73 L5 10.8 Z"/><path d="M12.9 0.5 L14.4 -1 L16.6 1.2 L15.1 2.7 Z"/></g></svg>
<div class="a ss" style="left:656px;top:45px">address@sakila</div>
<div class="a tab" style="left:772px;width:129px"></div>
<svg class="a" style="left:777px;top:42px" width="17" height="17" viewBox="0 0 17 17"><path d="M10 1.2 H3.3 Q0.9 1.2 0.9 3.6 V12.8 Q0.9 15.2 3.3 15.2 H12.5 Q14.9 15.2 14.9 12.8 V6.4" fill="none" stroke="#3a85c8" stroke-width="1.6"/><g transform="translate(-0.3 0.7)" fill="#3a85c8"><path d="M5.87 7.47 L12.37 0.97 L14.63 3.23 L8.13 9.73 Z"/><path d="M5.87 7.47 L8.13 9.73 L5 10.8 Z"/><path d="M12.9 0.5 L14.4 -1 L16.6 1.2 L15.1 2.7 Z"/></g></svg>
<div class="a ss" style="left:802px;top:45px">city@sakila</div>
<div class="a" style="left:900px;top:36px;width:92px;height:27px;background:#fff;border:1px solid #8a8a8a;border-bottom:none"></div>
<div class="a ss" style="left:905px;top:43px">* Untitled</div>
<svg class="a" style="left:973px;top:45px" width="11" height="10" viewBox="0 0 11 10"><path d="M1.2 0.8 L9.8 9.2 M9.8 0.8 L1.2 9.2" stroke="#d8281a" stroke-width="2.2"/></svg>
<div class="a combo" style="left:255px;top:73px;width:175px;height:20px"></div>
<svg class="a" style="left:260px;top:76px" width="14" height="14" viewBox="0 0 14 14"><rect x="0" y="0" width="14" height="14" rx="1.5" fill="#3fd345"/><path d="M0.8 2.3 L3.5 2.4 L5.6 3.6 L6.8 5.2 L7.6 7.2 L9.8 8.6 L11.5 9.8 L12.2 11 L13.3 12.6 L11 12.5 L9 12 L7 11.3 L5.4 10.2 L4.4 9 L3.2 7.6 L3 5.6 L2.6 4.3 L1.6 3.2 Z" fill="#fff"/></svg>
<div class="a ss" style="left:281px;top:77px">192.168.31.190_3306</div>
<svg class="a" style="left:417px;top:82px" width="8" height="5" viewBox="0 0 8 5"><path d="M0 0H8L4 4.5Z" fill="#111"/></svg>
<div class="a combo" style="left:436px;top:73px;width:125px;height:20px"></div>
<div class="a ss" style="left:441px;top:77px">sakila</div>
<svg class="a" style="left:548px;top:82px" width="8" height="5" viewBox="0 0 8 5"><path d="M0 0H8L4 4.5Z" fill="#111"/></svg>
<svg class="a" style="left:575px;top:70px" width="170" height="26" viewBox="575 70 170 26">
<path d="M583 75 L597.5 83 L583 91 Z" fill="#5bbd2b"/>
<path d="M603 80.5 H611 L607 84.5 Z" fill="#222"/>
<rect x="624" y="76" width="14" height="14" rx="1" fill="#9b9b9b"/>
<rect x="652" y="75" width="16" height="16" rx="1.5" fill="#a3a3a3"/>
<path d="M660 77.5 L664.5 82 H661.6 V86 H658.4 V82 H655.5 Z" fill="#fff"/><rect x="655" y="87.3" width="10" height="1.3" fill="#fff"/>
<rect x="681" y="75" width="16" height="16" rx="2" fill="#9f9f9f"/>
<path d="M684.5 81.5 L688.5 77.8 V80 Q694 80 694 85 Q694 88 691.5 89.5 Q692.3 84 688.5 83.5 V85.5 Z" fill="#fff"/>
<rect x="723.8" y="76.7" width="9.2" height="10.1" rx="1.3" fill="none" stroke="#3a90c9" stroke-width="1.3"/>
<rect x="721.3" y="79.6" width="9" height="9.7" rx="1.3" fill="#e9f1f8" stroke="#3a90c9" stroke-width="1.3"/>
<path d="M723.3 81.6h5.3M723.3 84.3h5.3M723.3 86.7h5.3" stroke="#3a90c9" stroke-width="1.2"/>
</svg>
<div class="a" style="left:2035px;top:76px;width:13px;height:13px;border:1px solid #8f8f8f;background:linear-gradient(135deg,#d8dce4,#f4f4f4)"></div>
<svg class="a" style="left:2036px;top:77px" width="11" height="11" viewBox="0 0 11 11"><path d="M2 5.5 L4.5 9 L9.5 1.5" fill="none" stroke="#3b55a0" stroke-width="1.8"/></svg>
<div class="a ss" style="left:2053px;top:77px">AutoCommit</div>
<div id="gutter" class="a"></div>
<div id="code" class="a"></div>
<div class="a" style="left:312px;top:445px;width:1806px;height:23px;background:#fcf8e5"></div>
<div class="a ln" style="top:101px">1</div>
<div class="a code" style="top:101px"><b class="kw">select</b></div>
<div class="a ln" style="top:124px">2</div>
<div class="a code" style="top:124px">    c.customer_id,</div>
<div class="a ln" style="top:147px">3</div>
<div class="a code" style="top:147px">    c.store_id,</div>
<div class="a ln" style="top:170px">4</div>
<div class="a code" style="top:170px">    c.first_name,</div>
<div class="a ln" style="top:193px">5</div>
<div class="a code" style="top:193px">    c.last_name,</div>
<div class="a ln" style="top:216px">6</div>
<div class="a code" style="top:216px">    c.email,</div>
<div class="a ln" style="top:239px">7</div>
<div class="a code" style="top:239px">    c.address_id,</div>
<div class="a ln" style="top:262px">8</div>
<div class="a code" style="top:262px">    c.active,</div>
<div class="a ln" style="top:285px">9</div>
<div class="a code" style="top:285px">    c.create_date,</div>
<div class="a ln" style="top:308px">10</div>
<div class="a code" style="top:308px">    c.last_update,</div>
<div class="a ln" style="top:331px">11</div>
<div class="a code" style="top:331px">    a.address</div>
<div class="a ln" style="top:354px">12</div>
<div class="a code" style="top:354px"><b class="kw">from</b></div>
<div class="a ln" style="top:377px">13</div>
<div class="a code" style="top:377px">    `customer` c</div>
<div class="a ln" style="top:400px">14</div>
<div class="a code" style="top:400px">    <b class="kw">inner</b> <b class="kw">join</b> address a <b class="kw">on</b> c.address_id = a.address_id</div>
<div class="a ln" style="top:423px">15</div>
<div class="a code" style="top:423px"><b class="kw">where</b></div>
<div class="a ln" style="top:446px">16</div>
<div class="a code" style="top:446px">    LENGTH(a.address) &gt; <span class="num">0</span> <b class="kw">and</b> a.</div>
<div class="a ln" style="top:469px">17</div>
<div class="a" style="left:603px;top:468px;width:380px;height:281px;background:#fff;border:1px solid #868a92;box-shadow:3px 0 0 #efefef"></div>
<svg class="a" style="left:608px;top:473px" width="16" height="14" viewBox="0 0 16 14"><g fill="#6d6d6d"><rect x="0" y="0" width="4.6" height="2.7"/><rect x="10.9" y="0" width="4.6" height="2.7"/><rect x="0" y="3.8" width="4.6" height="2.7"/><rect x="10.9" y="3.8" width="4.6" height="2.7"/><rect x="0" y="7.6" width="4.6" height="2.7"/><rect x="10.9" y="7.6" width="4.6" height="2.7"/><rect x="0" y="11.3" width="4.6" height="2.7"/><rect x="10.9" y="11.3" width="4.6" height="2.7"/></g><rect x="5.4" y="0" width="4.7" height="14" fill="#f7a90a"/></svg>
<div class="a pn" style="left:630px;top:470px">address_id</div>
<div class="a ss pt" style="left:715px;top:475px">smallint</div>
<div class="a ss" style="left:852px;top:475px">[address]</div>
<svg class="a" style="left:608px;top:494px" width="16" height="14" viewBox="0 0 16 14"><g fill="#6d6d6d"><rect x="0" y="0" width="4.6" height="2.7"/><rect x="10.9" y="0" width="4.6" height="2.7"/><rect x="0" y="3.8" width="4.6" height="2.7"/><rect x="10.9" y="3.8" width="4.6" height="2.7"/><rect x="0" y="7.6" width="4.6" height="2.7"/><rect x="10.9" y="7.6" width="4.6" height="2.7"/><rect x="0" y="11.3" width="4.6" height="2.7"/><rect x="10.9" y="11.3" width="4.6" height="2.7"/></g><rect x="5.4" y="0" width="4.7" height="14" fill="#f7a90a"/></svg>
<div class="a pn" style="left:630px;top:491px">address</div>
<div class="a ss pt" style="left:699px;top:496px">varchar(50)</div>
<div class="a ss" style="left:844px;top:496px">[address]</div>
<svg class="a" style="left:608px;top:515px" width="16" height="14" viewBox="0 0 16 14"><g fill="#6d6d6d"><rect x="0" y="0" width="4.6" height="2.7"/><rect x="10.9" y="0" width="4.6" height="2.7"/><rect x="0" y="3.8" width="4.6" height="2.7"/><rect x="10.9" y="3.8" width="4.6" height="2.7"/><rect x="0" y="7.6" width="4.6" height="2.7"/><rect x="10.9" y="7.6" width="4.6" height="2.7"/><rect x="0" y="11.3" width="4.6" height="2.7"/><rect x="10.9" y="11.3" width="4.6" height="2.7"/></g><rect x="5.4" y="0" width="4.7" height="14" fill="#f7a90a"/></svg>
<div class="a pn" style="left:630px;top:512px">address2</div>
<div class="a ss pt" style="left:706px;top:517px">varchar(50)</div>
<div class="a ss" style="left:848px;top:517px">[address]</div>
<svg class="a" style="left:608px;top:536px" width="16" height="14" viewBox="0 0 16 14"><g fill="#6d6d6d"><rect x="0" y="0" width="4.6" height="2.7"/><rect x="10.9" y="0" width="4.6" height="2.7"/><rect x="0" y="3.8" width="4.6" height="2.7"/><rect x="10.9" y="3.8" width="4.6" height="2.7"/><rect x="0" y="7.6" width="4.6" height="2.7"/><rect x="10.9" y="7.6" width="4.6" height="2.7"/><rect x="0" y="11.3" width="4.6" height="2.7"/><rect x="10.9" y="11.3" width="4.6" height="2.7"/></g><rect x="5.4" y="0" width="4.7" height="14" fill="#f7a90a"/></svg>
<div class="a pn" style="left:630px;top:533px">district</div>
<div class="a ss pt" style="left:692px;top:538px">varchar(20)</div>
<div class="a ss" style="left:841px;top:538px">[address]</div>
<svg class="a" style="left:608px;top:557px" width="16" height="14" viewBox="0 0 16 14"><g fill="#6d6d6d"><rect x="0" y="0" width="4.6" height="2.7"/><rect x="10.9" y="0" width="4.6" height="2.7"/><rect x="0" y="3.8" width="4.6" height="2.7"/><rect x="10.9" y="3.8" width="4.6" height="2.7"/><rect x="0" y="7.6" width="4.6" height="2.7"/><rect x="10.9" y="7.6" width="4.6" height="2.7"/><rect x="0" y="11.3" width="4.6" height="2.7"/><rect x="10.9" y="11.3" width="4.6" height="2.7"/></g><rect x="5.4" y="0" width="4.7" height="14" fill="#f7a90a"/></svg>
<div class="a pn" style="left:630px;top:554px">city_id</div>
<div class="a ss pt" style="left:687px;top:559px">smallint</div>
<div class="a ss" style="left:838px;top:559px">[address]</div>
<svg class="a" style="left:608px;top:578px" width="16" height="14" viewBox="0 0 16 14"><g fill="#6d6d6d"><rect x="0" y="0" width="4.6" height="2.7"/><rect x="10.9" y="0" width="4.6" height="2.7"/><rect x="0" y="3.8" width="4.6" height="2.7"/><rect x="10.9" y="3.8" width="4.6" height="2.7"/><rect x="0" y="7.6" width="4.6" height="2.7"/><rect x="10.9" y="7.6" width="4.6" height="2.7"/><rect x="0" y="11.3" width="4.6" height="2.7"/><rect x="10.9" y="11.3" width="4.6" height="2.7"/></g><rect x="5.4" y="0" width="4.7" height="14" fill="#f7a90a"/></svg>
<div class="a pn" style="left:630px;top:575px">postal_code</div>
<div class="a ss pt" style="left:722px;top:580px">varchar(10)</div>
<div class="a ss" style="left:856px;top:580px">[address]</div>
<svg class="a" style="left:608px;top:599px" width="16" height="14" viewBox="0 0 16 14"><g fill="#6d6d6d"><rect x="0" y="0" width="4.6" height="2.7"/><rect x="10.9" y="0" width="4.6" height="2.7"/><rect x="0" y="3.8" width="4.6" height="2.7"/><rect x="10.9" y="3.8" width="4.6" height="2.7"/><rect x="0" y="7.6" width="4.6" height="2.7"/><rect x="10.9" y="7.6" width="4.6" height="2.7"/><rect x="0" y="11.3" width="4.6" height="2.7"/><rect x="10.9" y="11.3" width="4.6" height="2.7"/></g><rect x="5.4" y="0" width="4.7" height="14" fill="#f7a90a"/></svg>
<div class="a pn" style="left:630px;top:596px">phone</div>
<div class="a ss pt" style="left:689px;top:601px">varchar(20)</div>
<div class="a ss" style="left:839px;top:601px">[address]</div>
<svg class="a" style="left:608px;top:620px" width="16" height="14" viewBox="0 0 16 14"><g fill="#6d6d6d"><rect x="0" y="0" width="4.6" height="2.7"/><rect x="10.9" y="0" width="4.6" height="2.7"/><rect x="0" y="3.8" width="4.6" height="2.7"/><rect x="10.9" y="3.8" width="4.6" height="2.7"/><rect x="0" y="7.6" width="4.6" height="2.7"/><rect x="10.9" y="7.6" width="4.6" height="2.7"/><rect x="0" y="11.3" width="4.6" height="2.7"/><rect x="10.9" y="11.3" width="4.6" height="2.7"/></g><rect x="5.4" y="0" width="4.7" height="14" fill="#f7a90a"/></svg>
<div class="a pn" style="left:630px;top:617px">location</div>
<div class="a ss pt" style="left:698px;top:622px">geometry</div>
<div class="a ss" style="left:844px;top:622px">[address]</div>
<svg class="a" style="left:608px;top:641px" width="16" height="14" viewBox="0 0 16 14"><g fill="#6d6d6d"><rect x="0" y="0" width="4.6" height="2.7"/><rect x="10.9" y="0" width="4.6" height="2.7"/><rect x="0" y="3.8" width="4.6" height="2.7"/><rect x="10.9" y="3.8" width="4.6" height="2.7"/><rect x="0" y="7.6" width="4.6" height="2.7"/><rect x="10.9" y="7.6" width="4.6" height="2.7"/><rect x="0" y="11.3" width="4.6" height="2.7"/><rect x="10.9" y="11.3" width="4.6" height="2.7"/></g><rect x="5.4" y="0" width="4.7" height="14" fill="#f7a90a"/></svg>
<div class="a pn" style="left:630px;top:638px">last_update</div>
<div class="a ss pt" style="left:718px;top:643px">timestamp</div>
<div class="a ss" style="left:854px;top:643px">[address]</div>
<div id="hscroll" class="a"></div>
<div id="hthumb" class="a"></div>
<div id="results" class="a"></div>
<div id="grid" class="a"></div>
<div class="a" style="left:246px;top:1228px;width:10px;height:1px;background:#7d8087"></div>
<svg class="a" style="left:265px;top:770px" width="270" height="22" viewBox="265 770 270 22">
<path d="M270.5 773.5 H281.5 L276 779.5 Z M270.5 779.5 H281.5 L276 788.5 Z" fill="#a9a9a9"/>
<path d="M270.5 778.2 L276 784 L281.5 778.2" fill="none" stroke="#a9a9a9" stroke-width="0"/>
<path d="M299.8 773.5 H310.6 L305.2 779 Z M299.8 779 H310.6 L305.2 785 Z" fill="#a9a9a9"/>
<rect x="299.8" y="786.2" width="10.8" height="2.2" fill="#a9a9a9"/>
<path d="M474.5 780 V787 H489.5 V783.5" fill="none" stroke="#3a8fd0" stroke-width="1.8"/>
<path d="M477.5 784 Q478.5 778 485 777.8 V774 L490.5 779.3 L485 784.5 V780.8 Q480.5 780.8 477.5 784 Z" fill="#3a8fd0"/>
<path d="M520 775 H514.5 Q513 775 513 776.5 V786.5 Q513 788 514.5 788 H525 Q526.5 788 526.5 786.5 V781" fill="none" stroke="#3a8fd0" stroke-width="1.8"/>
<path d="M518 784 L518.8 781 L525 774.8 L527.2 777 L521 783.2 Z" fill="#3a8fd0"/>
</svg>
<div class="a" style="left:323px;top:771px;width:133px;height:20px;background:#fff;border:1px solid #cfd5df;border-radius:2px"></div>
<div class="a ss" style="left:326px;top:776px;color:#555">Regex Filter</div>
<div class="a" style="left:257px;top:796px;width:1847px;height:430px;overflow:hidden"><div class="a" style="left:-257px;top:-796px;width:2120px;height:1250px">
<div class="a" style="left:257px;top:796px;width:1847px;height:26px;background:#f0f0f0"></div>
<div class="a" style="left:257px;top:821px;width:1398px;height:1px;background:#a0a0a0"></div>
<div class="a" style="left:257px;top:821px;width:31px;height:405px;background:#f0f0f0"></div>
<div class="a" style="left:257px;top:839px;width:31px;height:1px;background:#a0a0a0"></div>
<div class="a" style="left:289px;top:839px;width:1366px;height:1px;background:#d9d9d9"></div>
<div class="a" style="left:257px;top:857px;width:31px;height:1px;background:#a0a0a0"></div>
<div class="a" style="left:289px;top:857px;width:1366px;height:1px;background:#d9d9d9"></div>
<div class="a" style="left:289px;top:858px;width:1366px;height:17px;background:#e9effb"></div>
<div class="a" style="left:257px;top:875px;width:31px;height:1px;background:#a0a0a0"></div>
<div class="a" style="left:289px;top:875px;width:1366px;height:1px;background:#d9d9d9"></div>
<div class="a" style="left:257px;top:893px;width:31px;height:1px;background:#a0a0a0"></div>
<div class="a" style="left:289px;top:893px;width:1366px;height:1px;background:#d9d9d9"></div>
<div class="a" style="left:257px;top:911px;width:31px;height:1px;background:#a0a0a0"></div>
<div class="a" style="left:289px;top:911px;width:1366px;height:1px;background:#d9d9d9"></div>
<div class="a" style="left:289px;top:912px;width:1366px;height:17px;background:#e9effb"></div>
<div class="a" style="left:257px;top:929px;width:31px;height:1px;background:#a0a0a0"></div>
<div class="a" style="left:289px;top:929px;width:1366px;height:1px;background:#d9d9d9"></div>
<div class="a" style="left:257px;top:947px;width:31px;height:1px;background:#a0a0a0"></div>
<div class="a" style="left:289px;top:947px;width:1366px;height:1px;background:#d9d9d9"></div>
<div class="a" style="left:257px;top:965px;width:31px;height:1px;background:#a0a0a0"></div>
<div class="a" style="left:289px;top:965px;width:1366px;height:1px;background:#d9d9d9"></div>
<div class="a" style="left:289px;top:966px;width:1366px;height:17px;background:#e9effb"></div>
<div class="a" style="left:257px;top:983px;width:31px;height:1px;background:#a0a0a0"></div>
<div class="a" style="left:289px;top:983px;width:1366px;height:1px;background:#d9d9d9"></div>
<div class="a" style="left:257px;top:1001px;width:31px;height:1px;background:#a0a0a0"></div>
<div class="a" style="left:289px;top:1001px;width:1366px;height:1px;background:#d9d9d9"></div>
<div class="a" style="left:257px;top:1019px;width:31px;height:1px;background:#a0a0a0"></div>
<div class="a" style="left:289px;top:1019px;width:1366px;height:1px;background:#d9d9d9"></div>
<div class="a" style="left:289px;top:1020px;width:1366px;height:17px;background:#e9effb"></div>
<div class="a" style="left:257px;top:1037px;width:31px;height:1px;background:#a0a0a0"></div>
<div class="a" style="left:289px;top:1037px;width:1366px;height:1px;background:#d9d9d9"></div>
<div class="a" style="left:257px;top:1055px;width:31px;height:1px;background:#a0a0a0"></div>
<div class="a" style="left:289px;top:1055px;width:1366px;height:1px;background:#d9d9d9"></div>
<div class="a" style="left:257px;top:1073px;width:31px;height:1px;background:#a0a0a0"></div>
<div class="a" style="left:289px;top:1073px;width:1366px;height:1px;background:#d9d9d9"></div>
<div class="a" style="left:289px;top:1074px;width:1366px;height:17px;background:#e9effb"></div>
<div class="a" style="left:257px;top:1091px;width:31px;height:1px;background:#a0a0a0"></div>
<div class="a" style="left:289px;top:1091px;width:1366px;height:1px;background:#d9d9d9"></div>
<div class="a" style="left:257px;top:1109px;width:31px;height:1px;background:#a0a0a0"></div>
<div class="a" style="left:289px;top:1109px;width:1366px;height:1px;background:#d9d9d9"></div>
<div class="a" style="left:257px;top:1127px;width:31px;height:1px;background:#a0a0a0"></div>
<div class="a" style="left:289px;top:1127px;width:1366px;height:1px;background:#d9d9d9"></div>
<div class="a" style="left:289px;top:1128px;width:1366px;height:17px;background:#e9effb"></div>
<div class="a" style="left:257px;top:1145px;width:31px;height:1px;background:#a0a0a0"></div>
<div class="a" style="left:289px;top:1145px;width:1366px;height:1px;background:#d9d9d9"></div>
<div class="a" style="left:257px;top:1163px;width:31px;height:1px;background:#a0a0a0"></div>
<div class="a" style="left:289px;top:1163px;width:1366px;height:1px;background:#d9d9d9"></div>
<div class="a" style="left:257px;top:1181px;width:31px;height:1px;background:#a0a0a0"></div>
<div class="a" style="left:289px;top:1181px;width:1366px;height:1px;background:#d9d9d9"></div>
<div class="a" style="left:289px;top:1182px;width:1366px;height:17px;background:#e9effb"></div>
<div class="a" style="left:257px;top:1199px;width:31px;height:1px;background:#a0a0a0"></div>
<div class="a" style="left:289px;top:1199px;width:1366px;height:1px;background:#d9d9d9"></div>
<div class="a" style="left:257px;top:1217px;width:31px;height:1px;background:#a0a0a0"></div>
<div class="a" style="left:289px;top:1217px;width:1366px;height:1px;background:#d9d9d9"></div>
<div class="a" style="left:257px;top:1235px;width:31px;height:1px;background:#a0a0a0"></div>
<div class="a" style="left:289px;top:1235px;width:1366px;height:1px;background:#d9d9d9"></div>
<div class="a" style="left:288px;top:796px;width:1px;height:430px;background:#a0a0a0"></div>
<div class="a" style="left:403px;top:796px;width:1px;height:26px;background:#a0a0a0"></div>
<div class="a" style="left:403px;top:822px;width:1px;height:404px;background:#d9d9d9"></div>
<svg class="a" style="left:295px;top:801px" width="9" height="15" viewBox="0 0 9 15"><path d="M0.3 6 L4.5 0 L8.7 6 Z M0.3 8.2 L4.5 14.2 L8.7 8.2 Z" fill="#c8c8c8"/></svg>
<div class="a hd" style="left:310px;width:93px">customer_id</div>
<div class="a" style="left:492px;top:796px;width:1px;height:26px;background:#a0a0a0"></div>
<div class="a" style="left:492px;top:822px;width:1px;height:404px;background:#d9d9d9"></div>
<svg class="a" style="left:410px;top:801px" width="9" height="15" viewBox="0 0 9 15"><path d="M0.3 6 L4.5 0 L8.7 6 Z M0.3 8.2 L4.5 14.2 L8.7 8.2 Z" fill="#c8c8c8"/></svg>
<div class="a hd" style="left:425px;width:67px">store_id</div>
<div class="a" style="left:597px;top:796px;width:1px;height:26px;background:#a0a0a0"></div>
<div class="a" style="left:597px;top:822px;width:1px;height:404px;background:#d9d9d9"></div>
<svg class="a" style="left:499px;top:801px" width="9" height="15" viewBox="0 0 9 15"><path d="M0.3 6 L4.5 0 L8.7 6 Z M0.3 8.2 L4.5 14.2 L8.7 8.2 Z" fill="#c8c8c8"/></svg>
<div class="a hd" style="left:514px;width:83px">first_name</div>
<div class="a" style="left:699px;top:796px;width:1px;height:26px;background:#a0a0a0"></div>
<div class="a" style="left:699px;top:822px;width:1px;height:404px;background:#d9d9d9"></div>
<svg class="a" style="left:604px;top:801px" width="9" height="15" viewBox="0 0 9 15"><path d="M0.3 6 L4.5 0 L8.7 6 Z M0.3 8.2 L4.5 14.2 L8.7 8.2 Z" fill="#c8c8c8"/></svg>
<div class="a hd" style="left:619px;width:80px">last_name</div>
<div class="a" style="left:965px;top:796px;width:1px;height:26px;background:#a0a0a0"></div>
<div class="a" style="left:965px;top:822px;width:1px;height:404px;background:#d9d9d9"></div>
<svg class="a" style="left:706px;top:801px" width="9" height="15" viewBox="0 0 9 15"><path d="M0.3 6 L4.5 0 L8.7 6 Z M0.3 8.2 L4.5 14.2 L8.7 8.2 Z" fill="#c8c8c8"/></svg>
<div class="a hd" style="left:721px;width:244px">email</div>
<div class="a" style="left:1070px;top:796px;width:1px;height:26px;background:#a0a0a0"></div>
<div class="a" style="left:1070px;top:822px;width:1px;height:404px;background:#d9d9d9"></div>
<svg class="a" style="left:972px;top:801px" width="9" height="15" viewBox="0 0 9 15"><path d="M0.3 6 L4.5 0 L8.7 6 Z M0.3 8.2 L4.5 14.2 L8.7 8.2 Z" fill="#c8c8c8"/></svg>
<div class="a hd" style="left:987px;width:83px">address_id</div>
<div class="a" style="left:1147px;top:796px;width:1px;height:26px;background:#a0a0a0"></div>
<div class="a" style="left:1147px;top:822px;width:1px;height:404px;background:#d9d9d9"></div>
<svg class="a" style="left:1077px;top:801px" width="9" height="15" viewBox="0 0 9 15"><path d="M0.3 6 L4.5 0 L8.7 6 Z M0.3 8.2 L4.5 14.2 L8.7 8.2 Z" fill="#c8c8c8"/></svg>
<div class="a hd" style="left:1092px;width:55px">active</div>
<div class="a" style="left:1282px;top:796px;width:1px;height:26px;background:#a0a0a0"></div>
<div class="a" style="left:1282px;top:822px;width:1px;height:404px;background:#d9d9d9"></div>
<svg class="a" style="left:1154px;top:801px" width="9" height="15" viewBox="0 0 9 15"><path d="M0.3 6 L4.5 0 L8.7 6 Z M0.3 8.2 L4.5 14.2 L8.7 8.2 Z" fill="#c8c8c8"/></svg>
<div class="a hd" style="left:1169px;width:113px">create_date</div>
<div class="a" style="left:1417px;top:796px;width:1px;height:26px;background:#a0a0a0"></div>
<div class="a" style="left:1417px;top:822px;width:1px;height:404px;background:#d9d9d9"></div>
<svg class="a" style="left:1289px;top:801px" width="9" height="15" viewBox="0 0 9 15"><path d="M0.3 6 L4.5 0 L8.7 6 Z M0.3 8.2 L4.5 14.2 L8.7 8.2 Z" fill="#c8c8c8"/></svg>
<div class="a hd" style="left:1304px;width:113px">last_update</div>
<div class="a" style="left:1655px;top:796px;width:1px;height:26px;background:#a0a0a0"></div>
<div class="a" style="left:1655px;top:822px;width:1px;height:404px;background:#d9d9d9"></div>
<svg class="a" style="left:1424px;top:801px" width="9" height="15" viewBox="0 0 9 15"><path d="M0.3 6 L4.5 0 L8.7 6 Z M0.3 8.2 L4.5 14.2 L8.7 8.2 Z" fill="#c8c8c8"/></svg>
<div class="a hd" style="left:1439px;width:216px">address</div>
<div class="a gc" style="left:259px;top:822px">1</div>
<div class="a gc" style="left:288px;width:112px;top:822px;text-align:right">1</div>
<div class="a gc" style="left:403px;width:86px;top:822px;text-align:right">1</div>
<div class="a gc" style="left:496px;top:822px">MARY</div>
<div class="a gc" style="left:601px;top:822px">SMITH</div>
<div class="a gc" style="left:703px;top:822px">MARY.SMITH@sakilacustomer.org</div>
<div class="a gc" style="left:965px;width:102px;top:822px;text-align:right">5</div>
<div class="a gc" style="left:1070px;width:74px;top:822px;text-align:right">1</div>
<div class="a gc dt" style="left:1151px;top:822px">2006-02-14 22:04:36</div>
<div class="a gc dt" style="left:1286px;top:822px">2006-02-15 04:57:20</div>
<div class="a gc" style="left:1421px;top:822px">1913 Hanoi Way</div>
<div class="a gc" style="left:259px;top:840px">2</div>
<div class="a gc" style="left:288px;width:112px;top:840px;text-align:right">2</div>
<div class="a gc" style="left:403px;width:86px;top:840px;text-align:right">1</div>
<div class="a gc" style="left:496px;top:840px">PATRICIA</div>
<div class="a gc" style="left:601px;top:840px">JOHNSON</div>
<div class="a gc" style="left:703px;top:840px">PATRICIA.JOHNSON@sakilacustomer.org</div>
<div class="a gc" style="left:965px;width:102px;top:840px;text-align:right">6</div>
<div class="a gc" style="left:1070px;width:74px;top:840px;text-align:right">1</div>
<div class="a gc dt" style="left:1151px;top:840px">2006-02-14 22:04:36</div>
<div class="a gc dt" style="left:1286px;top:840px">2006-02-15 04:57:20</div>
<div class="a gc" style="left:1421px;top:840px">1121 Loja Avenue</div>
<div class="a gc" style="left:259px;top:858px">3</div>
<div class="a gc" style="left:288px;width:112px;top:858px;text-align:right">3</div>
<div class="a gc" style="left:403px;width:86px;top:858px;text-align:right">1</div>
<div class="a gc" style="left:496px;top:858px">LINDA</div>
<div class="a gc" style="left:601px;top:858px">WILLIAMS</div>
<div class="a gc" style="left:703px;top:858px">LINDA.WILLIAMS@sakilacustomer.org</div>
<div class="a gc" style="left:965px;width:102px;top:858px;text-align:right">7</div>
<div class="a gc" style="left:1070px;width:74px;top:858px;text-align:right">1</div>
<div class="a gc dt" style="left:1151px;top:858px">2006-02-14 22:04:36</div>
<div class="a gc dt" style="left:1286px;top:858px">2006-02-15 04:57:20</div>
<div class="a gc" style="left:1421px;top:858px">692 Joliet Street</div>
<div class="a gc" style="left:259px;top:876px">4</div>
<div class="a gc" style="left:288px;width:112px;top:876px;text-align:right">4</div>
<div class="a gc" style="left:403px;width:86px;top:876px;text-align:right">2</div>
<div class="a gc" style="left:496px;top:876px">BARBARA</div>
<div class="a gc" style="left:601px;top:876px">JONES</div>
<div class="a gc" style="left:703px;top:876px">BARBARA.JONES@sakilacustomer.org</div>
<div class="a gc" style="left:965px;width:102px;top:876px;text-align:right">8</div>
<div class="a gc" style="left:1070px;width:74px;top:876px;text-align:right">1</div>
<div class="a gc dt" style="left:1151px;top:876px">2006-02-14 22:04:36</div>
<div class="a gc dt" style="left:1286px;top:876px">2006-02-15 04:57:20</div>
<div class="a gc" style="left:1421px;top:876px">1566 Inegl Manor</div>
<div class="a gc" style="left:259px;top:894px">5</div>
<div class="a gc" style="left:288px;width:112px;top:894px;text-align:right">5</div>
<div class="a gc" style="left:403px;width:86px;top:894px;text-align:right">1</div>
<div class="a gc" style="left:496px;top:894px">ELIZABETH</div>
<div class="a gc" style="left:601px;top:894px">BROWN</div>
<div class="a gc" style="left:703px;top:894px">ELIZABETH.BROWN@sakilacustomer.org</div>
<div class="a gc" style="left:965px;width:102px;top:894px;text-align:right">9</div>
<div class="a gc" style="left:1070px;width:74px;top:894px;text-align:right">1</div>
<div class="a gc dt" style="left:1151px;top:894px">2006-02-14 22:04:36</div>
<div class="a gc dt" style="left:1286px;top:894px">2006-02-15 04:57:20</div>
<div class="a gc" style="left:1421px;top:894px">53 Idfu Parkway</div>
<div class="a gc" style="left:259px;top:912px">6</div>
<div class="a gc" style="left:288px;width:112px;top:912px;text-align:right">6</div>
<div class="a gc" style="left:403px;width:86px;top:912px;text-align:right">2</div>
<div class="a gc" style="left:496px;top:912px">JENNIFER</div>
<div class="a gc" style="left:601px;top:912px">DAVIS</div>
<div class="a gc" style="left:703px;top:912px">JENNIFER.DAVIS@sakilacustomer.org</div>
<div class="a gc" style="left:965px;width:102px;top:912px;text-align:right">10</div>
<div class="a gc" style="left:1070px;width:74px;top:912px;text-align:right">1</div>
<div class="a gc dt" style="left:1151px;top:912px">2006-02-14 22:04:36</div>
<div class="a gc dt" style="left:1286px;top:912px">2006-02-15 04:57:20</div>
<div class="a gc" style="left:1421px;top:912px">1795 Santiago de Compostela Way</div>
<div class="a gc" style="left:259px;top:930px">7</div>
<div class="a gc" style="left:288px;width:112px;top:930px;text-align:right">7</div>
<div class="a gc" style="left:403px;width:86px;top:930px;text-align:right">1</div>
<div class="a gc" style="left:496px;top:930px">MARIA</div>
<div class="a gc" style="left:601px;top:930px">MILLER</div>
<div class="a gc" style="left:703px;top:930px">MARIA.MILLER@sakilacustomer.org</div>
<div class="a gc" style="left:965px;width:102px;top:930px;text-align:right">11</div>
<div class="a gc" style="left:1070px;width:74px;top:930px;text-align:right">1</div>
<div class="a gc dt" style="left:1151px;top:930px">2006-02-14 22:04:36</div>
<div class="a gc dt" style="left:1286px;top:930px">2006-02-15 04:57:20</div>
<div class="a gc" style="left:1421px;top:930px">900 Santiago de Compostela Parkway</div>
<div class="a gc" style="left:259px;top:948px">8</div>
<div class="a gc" style="left:288px;width:112px;top:948px;text-align:right">8</div>
<div class="a gc" style="left:403px;width:86px;top:948px;text-align:right">2</div>
<div class="a gc" style="left:496px;top:948px">SUSAN</div>
<div class="a gc" style="left:601px;top:948px">WILSON</div>
<div class="a gc" style="left:703px;top:948px">SUSAN.WILSON@sakilacustomer.org</div>
<div class="a gc" style="left:965px;width:102px;top:948px;text-align:right">12</div>
<div class="a gc" style="left:1070px;width:74px;top:948px;text-align:right">1</div>
<div class="a gc dt" style="left:1151px;top:948px">2006-02-14 22:04:36</div>
<div class="a gc dt" style="left:1286px;top:948px">2006-02-15 04:57:20</div>
<div class="a gc" style="left:1421px;top:948px">478 Joliet Way</div>
<div class="a gc" style="left:259px;top:966px">9</div>
<div class="a gc" style="left:288px;width:112px;top:966px;text-align:right">9</div>
<div class="a gc" style="left:403px;width:86px;top:966px;text-align:right">2</div>
<div class="a gc" style="left:496px;top:966px">MARGARET</div>
<div class="a gc" style="left:601px;top:966px">MOORE</div>
<div class="a gc" style="left:703px;top:966px">MARGARET.MOORE@sakilacustomer.org</div>
<div class="a gc" style="left:965px;width:102px;top:966px;text-align:right">13</div>
<div class="a gc" style="left:1070px;width:74px;top:966px;text-align:right">1</div>
<div class="a gc dt" style="left:1151px;top:966px">2006-02-14 22:04:36</div>
<div class="a gc dt" style="left:1286px;top:966px">2006-02-15 04:57:20</div>
<div class="a gc" style="left:1421px;top:966px">613 Korolev Drive</div>
<div class="a gc" style="left:259px;top:984px">10</div>
<div class="a gc" style="left:288px;width:112px;top:984px;text-align:right">10</div>
<div class="a gc" style="left:403px;width:86px;top:984px;text-align:right">1</div>
<div class="a gc" style="left:496px;top:984px">DOROTHY</div>
<div class="a gc" style="left:601px;top:984px">TAYLOR</div>
<div class="a gc" style="left:703px;top:984px">DOROTHY.TAYLOR@sakilacustomer.org</div>
<div class="a gc" style="left:965px;width:102px;top:984px;text-align:right">14</div>
<div class="a gc" style="left:1070px;width:74px;top:984px;text-align:right">1</div>
<div class="a gc dt" style="left:1151px;top:984px">2006-02-14 22:04:36</div>
<div class="a gc dt" style="left:1286px;top:984px">2006-02-15 04:57:20</div>
<div class="a gc" style="left:1421px;top:984px">1531 Sal Drive</div>
<div class="a gc" style="left:259px;top:1002px">11</div>
<div class="a gc" style="left:288px;width:112px;top:1002px;text-align:right">11</div>
<div class="a gc" style="left:403px;width:86px;top:1002px;text-align:right">2</div>
<div class="a gc" style="left:496px;top:1002px">LISA</div>
<div class="a gc" style="left:601px;top:1002px">ANDERSON</div>
<div class="a gc" style="left:703px;top:1002px">LISA.ANDERSON@sakilacustomer.org</div>
<div class="a gc" style="left:965px;width:102px;top:1002px;text-align:right">15</div>
<div class="a gc" style="left:1070px;width:74px;top:1002px;text-align:right">1</div>
<div class="a gc dt" style="left:1151px;top:1002px">2006-02-14 22:04:36</div>
<div class="a gc dt" style="left:1286px;top:1002px">2006-02-15 04:57:20</div>
<div class="a gc" style="left:1421px;top:1002px">1542 Tarlac Parkway</div>
<div class="a gc" style="left:259px;top:1020px">12</div>
<div class="a gc" style="left:288px;width:112px;top:1020px;text-align:right">12</div>
<div class="a gc" style="left:403px;width:86px;top:1020px;text-align:right">1</div>
<div class="a gc" style="left:496px;top:1020px">NANCY</div>
<div class="a gc" style="left:601px;top:1020px">THOMAS</div>
<div class="a gc" style="left:703px;top:1020px">NANCY.THOMAS@sakilacustomer.org</div>
<div class="a gc" style="left:965px;width:102px;top:1020px;text-align:right">16</div>
<div class="a gc" style="left:1070px;width:74px;top:1020px;text-align:right">1</div>
<div class="a gc dt" style="left:1151px;top:1020px">2006-02-14 22:04:36</div>
<div class="a gc dt" style="left:1286px;top:1020px">2006-02-15 04:57:20</div>
<div class="a gc" style="left:1421px;top:1020px">808 Bhopal Manor</div>
<div class="a gc" style="left:259px;top:1038px">13</div>
<div class="a gc" style="left:288px;width:112px;top:1038px;text-align:right">13</div>
<div class="a gc" style="left:403px;width:86px;top:1038px;text-align:right">2</div>
<div class="a gc" style="left:496px;top:1038px">KAREN</div>
<div class="a gc" style="left:601px;top:1038px">JACKSON</div>
<div class="a gc" style="left:703px;top:1038px">KAREN.JACKSON@sakilacustomer.org</div>
<div class="a gc" style="left:965px;width:102px;top:1038px;text-align:right">17</div>
<div class="a gc" style="left:1070px;width:74px;top:1038px;text-align:right">1</div>
<div class="a gc dt" style="left:1151px;top:1038px">2006-02-14 22:04:36</div>
<div class="a gc dt" style="left:1286px;top:1038px">2006-02-15 04:57:20</div>
<div class="a gc" style="left:1421px;top:1038px">270 Amroha Parkway</div>
<div class="a gc" style="left:259px;top:1056px">14</div>
<div class="a gc" style="left:288px;width:112px;top:1056px;text-align:right">14</div>
<div class="a gc" style="left:403px;width:86px;top:1056px;text-align:right">2</div>
<div class="a gc" style="left:496px;top:1056px">BETTY</div>
<div class="a gc" style="left:601px;top:1056px">WHITE</div>
<div class="a gc" style="left:703px;top:1056px">BETTY.WHITE@sakilacustomer.org</div>
<div class="a gc" style="left:965px;width:102px;top:1056px;text-align:right">18</div>
<div class="a gc" style="left:1070px;width:74px;top:1056px;text-align:right">1</div>
<div class="a gc dt" style="left:1151px;top:1056px">2006-02-14 22:04:36</div>
<div class="a gc dt" style="left:1286px;top:1056px">2006-02-15 04:57:20</div>
<div class="a gc" style="left:1421px;top:1056px">770 Bydgoszcz Avenue</div>
<div class="a gc" style="left:259px;top:1074px">15</div>
<div class="a gc" style="left:288px;width:112px;top:1074px;text-align:right">15</div>
<div class="a gc" style="left:403px;width:86px;top:1074px;text-align:right">1</div>
<div class="a gc" style="left:496px;top:1074px">HELEN</div>
<div class="a gc" style="left:601px;top:1074px">HARRIS</div>
<div class="a gc" style="left:703px;top:1074px">HELEN.HARRIS@sakilacustomer.org</div>
<div class="a gc" style="left:965px;width:102px;top:1074px;text-align:right">19</div>
<div class="a gc" style="left:1070px;width:74px;top:1074px;text-align:right">1</div>
<div class="a gc dt" style="left:1151px;top:1074px">2006-02-14 22:04:36</div>
<div class="a gc dt" style="left:1286px;top:1074px">2006-02-15 04:57:20</div>
<div class="a gc" style="left:1421px;top:1074px">419 Iligan Lane</div>
<div class="a gc" style="left:259px;top:1092px">16</div>
<div class="a gc" style="left:288px;width:112px;top:1092px;text-align:right">16</div>
<div class="a gc" style="left:403px;width:86px;top:1092px;text-align:right">2</div>
<div class="a gc" style="left:496px;top:1092px">SANDRA</div>
<div class="a gc" style="left:601px;top:1092px">MARTIN</div>
<div class="a gc" style="left:703px;top:1092px">SANDRA.MARTIN@sakilacustomer.org</div>
<div class="a gc" style="left:965px;width:102px;top:1092px;text-align:right">20</div>
<div class="a gc" style="left:1070px;width:74px;top:1092px;text-align:right">0</div>
<div class="a gc dt" style="left:1151px;top:1092px">2006-02-14 22:04:36</div>
<div class="a gc dt" style="left:1286px;top:1092px">2006-02-15 04:57:20</div>
<div class="a gc" style="left:1421px;top:1092px">360 Toulouse Parkway</div>
<div class="a gc" style="left:259px;top:1110px">17</div>
<div class="a gc" style="left:288px;width:112px;top:1110px;text-align:right">17</div>
<div class="a gc" style="left:403px;width:86px;top:1110px;text-align:right">1</div>
<div class="a gc" style="left:496px;top:1110px">DONNA</div>
<div class="a gc" style="left:601px;top:1110px">THOMPSON</div>
<div class="a gc" style="left:703px;top:1110px">DONNA.THOMPSON@sakilacustomer.org</div>
<div class="a gc" style="left:965px;width:102px;top:1110px;text-align:right">21</div>
<div class="a gc" style="left:1070px;width:74px;top:1110px;text-align:right">1</div>
<div class="a gc dt" style="left:1151px;top:1110px">2006-02-14 22:04:36</div>
<div class="a gc dt" style="left:1286px;top:1110px">2006-02-15 04:57:20</div>
<div class="a gc" style="left:1421px;top:1110px">270 Toulon Boulevard</div>
<div class="a gc" style="left:259px;top:1128px">18</div>
<div class="a gc" style="left:288px;width:112px;top:1128px;text-align:right">18</div>
<div class="a gc" style="left:403px;width:86px;top:1128px;text-align:right">2</div>
<div class="a gc" style="left:496px;top:1128px">CAROL</div>
<div class="a gc" style="left:601px;top:1128px">GARCIA</div>
<div class="a gc" style="left:703px;top:1128px">CAROL.GARCIA@sakilacustomer.org</div>
<div class="a gc" style="left:965px;width:102px;top:1128px;text-align:right">22</div>
<div class="a gc" style="left:1070px;width:74px;top:1128px;text-align:right">1</div>
<div class="a gc dt" style="left:1151px;top:1128px">2006-02-14 22:04:36</div>
<div class="a gc dt" style="left:1286px;top:1128px">2006-02-15 04:57:20</div>
<div class="a gc" style="left:1421px;top:1128px">320 Brest Avenue</div>
<div class="a gc" style="left:259px;top:1146px">19</div>
<div class="a gc" style="left:288px;width:112px;top:1146px;text-align:right">19</div>
<div class="a gc" style="left:403px;width:86px;top:1146px;text-align:right">1</div>
<div class="a gc" style="left:496px;top:1146px">RUTH</div>
<div class="a gc" style="left:601px;top:1146px">MARTINEZ</div>
<div class="a gc" style="left:703px;top:1146px">RUTH.MARTINEZ@sakilacustomer.org</div>
<div class="a gc" style="left:965px;width:102px;top:1146px;text-align:right">23</div>
<div class="a gc" style="left:1070px;width:74px;top:1146px;text-align:right">1</div>
<div class="a gc dt" style="left:1151px;top:1146px">2006-02-14 22:04:36</div>
<div class="a gc dt" style="left:1286px;top:1146px">2006-02-15 04:57:20</div>
<div class="a gc" style="left:1421px;top:1146px">1417 Lancaster Avenue</div>
<div class="a gc" style="left:259px;top:1164px">20</div>
<div class="a gc" style="left:288px;width:112px;top:1164px;text-align:right">20</div>
<div class="a gc" style="left:403px;width:86px;top:1164px;text-align:right">2</div>
<div class="a gc" style="left:496px;top:1164px">SHARON</div>
<div class="a gc" style="left:601px;top:1164px">ROBINSON</div>
<div class="a gc" style="left:703px;top:1164px">SHARON.ROBINSON@sakilacustomer.org</div>
<div class="a gc" style="left:965px;width:102px;top:1164px;text-align:right">24</div>
<div class="a gc" style="left:1070px;width:74px;top:1164px;text-align:right">1</div>
<div class="a gc dt" style="left:1151px;top:1164px">2006-02-14 22:04:36</div>
<div class="a gc dt" style="left:1286px;top:1164px">2006-02-15 04:57:20</div>
<div class="a gc" style="left:1421px;top:1164px">1688 Okara Way</div>
<div class="a gc" style="left:259px;top:1182px">21</div>
<div class="a gc" style="left:288px;width:112px;top:1182px;text-align:right">21</div>
<div class="a gc" style="left:403px;width:86px;top:1182px;text-align:right">1</div>
<div class="a gc" style="left:496px;top:1182px">MICHELLE</div>
<div class="a gc" style="left:601px;top:1182px">CLARK</div>
<div class="a gc" style="left:703px;top:1182px">MICHELLE.CLARK@sakilacustomer.org</div>
<div class="a gc" style="left:965px;width:102px;top:1182px;text-align:right">25</div>
<div class="a gc" style="left:1070px;width:74px;top:1182px;text-align:right">1</div>
<div class="a gc dt" style="left:1151px;top:1182px">2006-02-14 22:04:36</div>
<div class="a gc dt" style="left:1286px;top:1182px">2006-02-15 04:57:20</div>
<div class="a gc" style="left:1421px;top:1182px">262 A Corua (La Corua) Parkway</div>
<div class="a gc" style="left:259px;top:1200px">22</div>
<div class="a gc" style="left:288px;width:112px;top:1200px;text-align:right">22</div>
<div class="a gc" style="left:403px;width:86px;top:1200px;text-align:right">1</div>
<div class="a gc" style="left:496px;top:1200px">LAURA</div>
<div class="a gc" style="left:601px;top:1200px">RODRIGUEZ</div>
<div class="a gc" style="left:703px;top:1200px">LAURA.RODRIGUEZ@sakilacustomer.org</div>
<div class="a gc" style="left:965px;width:102px;top:1200px;text-align:right">26</div>
<div class="a gc" style="left:1070px;width:74px;top:1200px;text-align:right">1</div>
<div class="a gc dt" style="left:1151px;top:1200px">2006-02-14 22:04:36</div>
<div class="a gc dt" style="left:1286px;top:1200px">2006-02-15 04:57:20</div>
<div class="a gc" style="left:1421px;top:1200px">28 Charlotte Amalie Street</div>
<div class="a gc" style="left:259px;top:1218px">23</div>
<div class="a gc" style="left:288px;width:112px;top:1218px;text-align:right">23</div>
<div class="a gc" style="left:403px;width:86px;top:1218px;text-align:right">2</div>
<div class="a gc" style="left:496px;top:1218px">SARAH</div>
<div class="a gc" style="left:601px;top:1218px">LEWIS</div>
<div class="a gc" style="left:703px;top:1218px">SARAH.LEWIS@sakilacustomer.org</div>
<div class="a gc" style="left:965px;width:102px;top:1218px;text-align:right">27</div>
<div class="a gc" style="left:1070px;width:74px;top:1218px;text-align:right">1</div>
<div class="a gc dt" style="left:1151px;top:1218px">2006-02-14 22:04:36</div>
<div class="a gc dt" style="left:1286px;top:1218px">2006-02-15 04:57:20</div>
<div class="a gc" style="left:1421px;top:1218px">1780 Hino Boulevard</div>
</div></div>
<div class="a" style="left:2104px;top:796px;width:12px;height:430px;background:#dcdcdc"></div>
<div class="a" style="left:2104px;top:796px;width:12px;height:24px;background:#adadad"></div>
<div class="a" style="left:1976px;top:1230px;width:1px;height:20px;background:#dadada"></div>
<div class="a" style="left:2064px;top:1230px;width:1px;height:20px;background:#dadada"></div>
<div class="a" style="left:2109px;top:1230px;width:1px;height:20px;background:#dadada"></div>
<div class="a sb" style="left:1826px;width:147px"></div>
<div class="a ss" style="left:1830px;top:1234px">Time:0.033s Fetched:599</div>
<div class="a sb" style="left:1980px;width:81px"></div>
<div class="a ss" style="left:1984px;top:1234px">MySQL 8.0.21</div>
<div class="a sb" style="left:2068px;width:39px"></div>
<div class="a ss" style="left:2072px;top:1234px">UTF-8</div>
</body></html>
